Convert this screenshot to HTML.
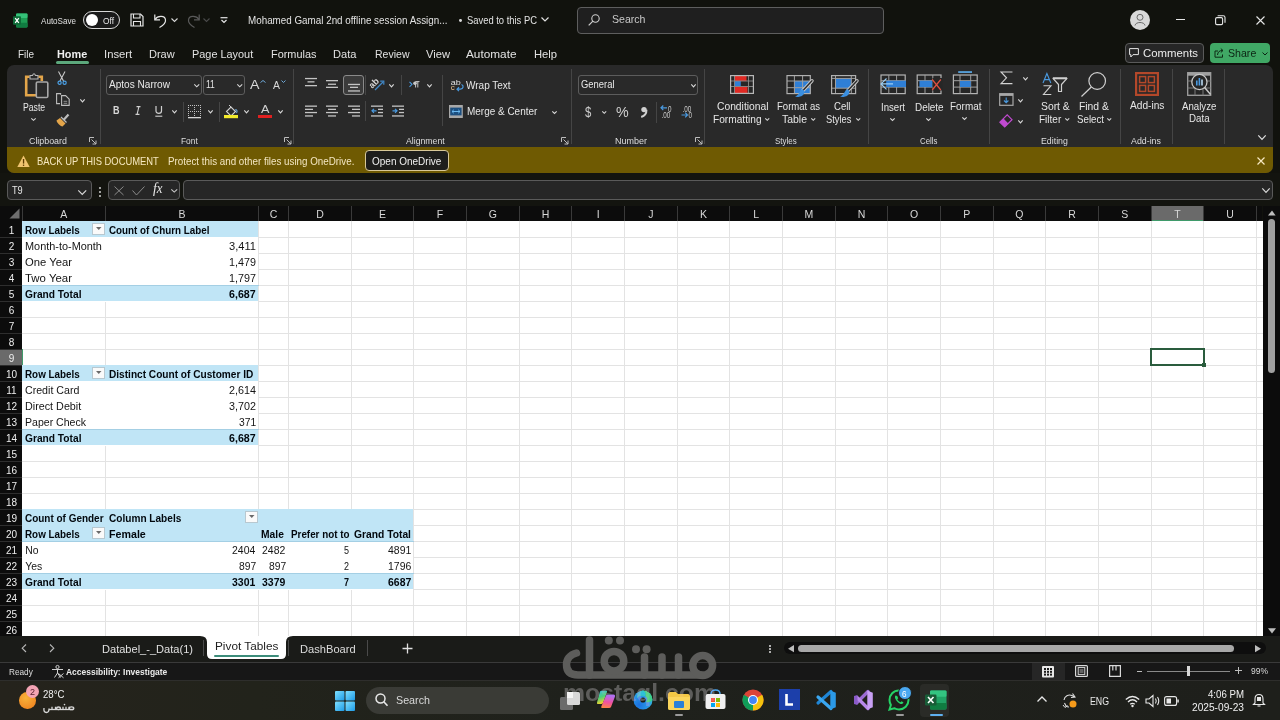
<!DOCTYPE html>
<html><head><meta charset="utf-8">
<style>
*{margin:0;padding:0;box-sizing:border-box}
html,body{width:1280px;height:720px;overflow:hidden;background:#11120d;font-family:"Liberation Sans",sans-serif;color:#e8e8e8;position:relative}
.a{position:absolute}
.t{position:absolute;white-space:nowrap;line-height:1;transform-origin:0 0}
svg{position:absolute;overflow:visible}
</style></head><body>

<div class="a" style="left:0px;top:0px;width:1280px;height:65px;background:#11120d;"></div>
<svg style="left:13px;top:13px;" width="15" height="15" viewBox="0 0 15 15">
<rect x="3" y="0.5" width="11.5" height="14" rx="1.2" fill="#1f9d55"/>
<rect x="3" y="0.5" width="11.5" height="4.6" rx="1" fill="#35c178"/>
<rect x="3" y="9.8" width="11.5" height="4.7" rx="1" fill="#107c41"/>
<rect x="0" y="3.2" width="8" height="8.6" rx="1" fill="#0e6b38"/>
<path d="M2.2 5.2 L5.8 9.8 M5.8 5.2 L2.2 9.8" stroke="#fff" stroke-width="1.3"/>
</svg>
<div class="t" style="left:41.00px;top:15.93px;font-size:9.5px;color:#e0e0e0;transform:scaleX(0.8499);">AutoSave</div>
<div class="a" style="left:83px;top:11px;width:37px;height:18px;border:1.3px solid #d8d8d8;border-radius:9px;background:#1a1a1a"></div>
<div class="a" style="left:85.5px;top:14px;width:12px;height:12px;border-radius:6px;background:#fff"></div>
<div class="t" style="left:103.00px;top:15.93px;font-size:9.5px;color:#e8e8e8;transform:scaleX(0.8772);">Off</div>
<svg style="left:130px;top:13px;" width="14" height="14" viewBox="0 0 14 14"><path d="M1 1 H10.5 L13 3.5 V13 H1 Z" fill="none" stroke="#e6e6e6" stroke-width="1.2"/>
<path d="M3.5 1 V5 H10 V1" fill="none" stroke="#e6e6e6" stroke-width="1.1"/>
<path d="M3.5 13 V8.5 H10.5 V13" fill="none" stroke="#e6e6e6" stroke-width="1.1"/></svg>
<svg style="left:153px;top:13px;" width="16" height="15" viewBox="0 0 16 15"><path d="M2 6.5 C5 2.2 12 2.5 12.5 7 C12.8 9.5 10 12.5 6.5 14.5" fill="none" stroke="#e6e6e6" stroke-width="1.2"/>
<path d="M1.8 1.5 V6.8 H7" fill="none" stroke="#e6e6e6" stroke-width="1.2"/></svg>
<svg style="left:171px;top:18px;" width="7" height="4" viewBox="0 0 7 4"><path d="M0.5 0.5 L3.5 3.5 L6.5 0.5" fill="none" stroke="#d8d8d8" stroke-width="1.1"/></svg>
<svg style="left:185px;top:13px;" width="16" height="15" viewBox="0 0 16 15"><path d="M14 6.5 C11 2.2 4 2.5 3.5 7 C3.2 9.5 6 12.5 9.5 14.5" fill="none" stroke="#5a5a5a" stroke-width="1.2"/>
<path d="M14.2 1.5 V6.8 H9" fill="none" stroke="#5a5a5a" stroke-width="1.2"/></svg>
<svg style="left:203px;top:18px;" width="7" height="4" viewBox="0 0 7 4"><path d="M0.5 0.5 L3.5 3.5 L6.5 0.5" fill="none" stroke="#4a4a4a" stroke-width="1.1"/></svg>
<svg style="left:220px;top:17px;" width="8" height="7" viewBox="0 0 8 7"><path d="M0.5 0.7 H7.5" stroke="#e6e6e6" stroke-width="1.2"/><path d="M1.5 3 L4 5.5 L6.5 3" fill="none" stroke="#e6e6e6" stroke-width="1.2"/></svg>
<div class="t" style="left:247.50px;top:14.99px;font-size:10.6px;color:#e2e2e2;transform:scaleX(0.9285);">Mohamed Gamal 2nd offline session Assign...</div>
<div class="a" style="left:459.3px;top:19.3px;width:2.8px;height:2.8px;background:#d8d8d8;border-radius:50%"></div>
<div class="t" style="left:466.50px;top:14.99px;font-size:10.6px;color:#e2e2e2;transform:scaleX(0.8864);">Saved to this PC</div>
<svg style="left:541px;top:17px;" width="8" height="5" viewBox="0 0 8 5"><path d="M0.5 0.5 L4 4 L7.5 0.5" fill="none" stroke="#e0e0e0" stroke-width="1.2"/></svg>
<div class="a" style="left:577px;top:7px;width:307px;height:27px;border:1px solid #5e5e5e;border-radius:4px;background:#1f1f1f"></div>
<svg style="left:588px;top:14px;" width="12" height="12" viewBox="0 0 12 12"><circle cx="7.5" cy="4.5" r="3.7" fill="none" stroke="#cfcfcf" stroke-width="1.1"/><path d="M4.9 7.1 L0.7 11.3" stroke="#cfcfcf" stroke-width="1.2"/></svg>
<div class="t" style="left:611.50px;top:14.22px;font-size:11.5px;color:#c8c8c8;transform:scaleX(0.9189);">Search</div>
<div class="a" style="left:1130px;top:9.8px;width:20px;height:20px;border-radius:10px;background:#d9d9d9"></div>
<svg style="left:1134px;top:13px;" width="12" height="14" viewBox="0 0 12 14"><circle cx="6" cy="4.3" r="3" fill="none" stroke="#6a6a6a" stroke-width="1"/><path d="M1 12.5 C1.5 8.5 10.5 8.5 11 12.5" fill="none" stroke="#6a6a6a" stroke-width="1"/></svg>
<div class="a" style="left:1176px;top:19px;width:9px;height:1.2px;background:#e6e6e6;"></div>
<svg style="left:1215px;top:15px;" width="11" height="10" viewBox="0 0 11 10"><rect x="0.6" y="2.6" width="7" height="7" rx="1.3" fill="none" stroke="#e6e6e6" stroke-width="1.1"/><path d="M2.6 0.7 H8.2 Q10 0.7 10 2.5 V7.8" fill="none" stroke="#e6e6e6" stroke-width="1.1"/></svg>
<svg style="left:1256px;top:16px;" width="9" height="9" viewBox="0 0 9 9"><path d="M0.5 0.5 L8.5 8.5 M8.5 0.5 L0.5 8.5" stroke="#e6e6e6" stroke-width="1.1"/></svg>
<div class="t" style="left:17.75px;top:47.64px;font-size:11.6px;color:#e2e2e2;transform:scaleX(0.8567);">File</div>
<div class="t" style="left:56.90px;top:47.64px;font-size:11.6px;font-weight:bold;color:#f0f0f0;transform:scaleX(0.9365);">Home</div>
<div class="t" style="left:103.75px;top:47.64px;font-size:11.6px;color:#e2e2e2;transform:scaleX(0.9724);">Insert</div>
<div class="t" style="left:148.90px;top:47.64px;font-size:11.6px;color:#e2e2e2;transform:scaleX(0.9488);">Draw</div>
<div class="t" style="left:191.90px;top:47.64px;font-size:11.6px;color:#e2e2e2;transform:scaleX(0.9396);">Page Layout</div>
<div class="t" style="left:271.25px;top:47.64px;font-size:11.6px;color:#e2e2e2;transform:scaleX(0.9406);">Formulas</div>
<div class="t" style="left:332.80px;top:47.64px;font-size:11.6px;color:#e2e2e2;transform:scaleX(0.9538);">Data</div>
<div class="t" style="left:374.50px;top:47.64px;font-size:11.6px;color:#e2e2e2;transform:scaleX(0.9067);">Review</div>
<div class="t" style="left:426.00px;top:47.64px;font-size:11.6px;color:#e2e2e2;transform:scaleX(0.9623);">View</div>
<div class="t" style="left:466.00px;top:47.64px;font-size:11.6px;color:#e2e2e2;transform:scaleX(1.0172);">Automate</div>
<div class="t" style="left:533.50px;top:47.64px;font-size:11.6px;color:#e2e2e2;transform:scaleX(0.9690);">Help</div>
<div class="a" style="left:56px;top:61.3px;width:33px;height:2.5px;background:#5ca87c;border-radius:1.5px"></div>
<div class="a" style="left:1125px;top:43px;width:79px;height:20px;border:1px solid #5a5a5a;border-radius:4px;background:#262626"></div>
<svg style="left:1129px;top:48px;" width="10" height="10" viewBox="0 0 10 10"><path d="M0.6 0.6 H9.4 V6.6 H4 L1.8 9 V6.6 H0.6 Z" fill="none" stroke="#e6e6e6" stroke-width="1"/></svg>
<div class="t" style="left:1142.50px;top:47.65px;font-size:11px;color:#ececec;transform:scaleX(1.0341);">Comments</div>
<div class="a" style="left:1210px;top:43px;width:60px;height:20px;border-radius:4px;background:#40a865"></div>
<svg style="left:1214px;top:48px;" width="10" height="10" viewBox="0 0 10 10"><path d="M4 3 H1 V9.2 H8.5 V6.5" fill="none" stroke="#0c2a14" stroke-width="1"/><path d="M3.5 7 C3.8 3.8 5.5 2.5 8.5 2.5 M6.8 0.6 L9 2.5 L6.8 4.5" fill="none" stroke="#0c2a14" stroke-width="1"/></svg>
<div class="t" style="left:1227.70px;top:47.65px;font-size:11px;color:#0c2414;transform:scaleX(0.9636);">Share</div>
<svg style="left:1262px;top:52px;" width="6" height="4" viewBox="0 0 6 4"><path d="M0.5 0.5 L3 3 L5.5 0.5" fill="none" stroke="#0c2414" stroke-width="1"/></svg>
<div class="a" style="left:7px;top:65px;width:1266px;height:108px;background:#292929;border-radius:7px;overflow:hidden"><div class="a" style="left:0;top:82px;width:1266px;height:26px;background:#6f5a02"></div></div>
<div class="a" style="left:100px;top:69px;width:1px;height:75px;background:#454545;"></div>
<div class="a" style="left:293px;top:69px;width:1px;height:75px;background:#454545;"></div>
<div class="a" style="left:571px;top:69px;width:1px;height:75px;background:#454545;"></div>
<div class="a" style="left:704px;top:69px;width:1px;height:75px;background:#454545;"></div>
<div class="a" style="left:868px;top:69px;width:1px;height:75px;background:#454545;"></div>
<div class="a" style="left:989px;top:69px;width:1px;height:75px;background:#454545;"></div>
<div class="a" style="left:1120px;top:69px;width:1px;height:75px;background:#454545;"></div>
<div class="a" style="left:1172px;top:69px;width:1px;height:75px;background:#454545;"></div>
<div class="a" style="left:1224px;top:69px;width:1px;height:75px;background:#454545;"></div>
<div class="t" style="left:28.75px;top:135.81px;font-size:9.4px;color:#dedede;transform:scaleX(0.9445);">Clipboard</div>
<svg style="left:89px;top:137px;" width="8" height="8" viewBox="0 0 8 8"><path d="M0.5 5 V0.5 H5" fill="none" stroke="#bdbdbd" stroke-width="1"/><path d="M2.5 2.5 L7 7 M7 3.5 V7 H3.5" fill="none" stroke="#bdbdbd" stroke-width="1"/></svg>
<div class="t" style="left:180.75px;top:135.81px;font-size:9.4px;color:#dedede;transform:scaleX(0.8936);">Font</div>
<svg style="left:284px;top:137px;" width="8" height="8" viewBox="0 0 8 8"><path d="M0.5 5 V0.5 H5" fill="none" stroke="#bdbdbd" stroke-width="1"/><path d="M2.5 2.5 L7 7 M7 3.5 V7 H3.5" fill="none" stroke="#bdbdbd" stroke-width="1"/></svg>
<div class="t" style="left:406.25px;top:135.81px;font-size:9.4px;color:#dedede;transform:scaleX(0.9286);">Alignment</div>
<svg style="left:561px;top:137px;" width="8" height="8" viewBox="0 0 8 8"><path d="M0.5 5 V0.5 H5" fill="none" stroke="#bdbdbd" stroke-width="1"/><path d="M2.5 2.5 L7 7 M7 3.5 V7 H3.5" fill="none" stroke="#bdbdbd" stroke-width="1"/></svg>
<div class="t" style="left:615.00px;top:135.81px;font-size:9.4px;color:#dedede;transform:scaleX(0.9576);">Number</div>
<svg style="left:695px;top:137px;" width="8" height="8" viewBox="0 0 8 8"><path d="M0.5 5 V0.5 H5" fill="none" stroke="#bdbdbd" stroke-width="1"/><path d="M2.5 2.5 L7 7 M7 3.5 V7 H3.5" fill="none" stroke="#bdbdbd" stroke-width="1"/></svg>
<div class="t" style="left:775.00px;top:135.81px;font-size:9.4px;color:#dedede;transform:scaleX(0.8511);">Styles</div>
<div class="t" style="left:919.50px;top:135.81px;font-size:9.4px;color:#dedede;transform:scaleX(0.8367);">Cells</div>
<div class="t" style="left:1040.50px;top:135.81px;font-size:9.4px;color:#dedede;transform:scaleX(0.9387);">Editing</div>
<div class="t" style="left:1130.75px;top:135.81px;font-size:9.4px;color:#dedede;transform:scaleX(0.9414);">Add-ins</div>
<svg style="left:1257.5px;top:135px;" width="8" height="4.5" viewBox="0 0 8 4.5"><path d="M0.3 0.3 L4.0 4.3 L7.7 0.3" fill="none" stroke="#e0e0e0" stroke-width="1.2"/></svg>
<svg style="left:24px;top:71px;" width="26" height="28" viewBox="0 0 26 28">
<path d="M5.5 5.8 H2.2 V24.3 H12" fill="none" stroke="#e3a54a" stroke-width="2.6"/>
<path d="M14.5 5.8 H17.8 V10" fill="none" stroke="#e3a54a" stroke-width="2.6"/>
<path d="M6 8 V4.5 H8.5 Q10 1 11.5 4.5 H14 V8 Z" fill="#2a2a2a" stroke="#b8b8b8" stroke-width="1.1"/>
<rect x="12.3" y="11" width="11.5" height="15.5" rx="1.3" fill="#2a2a2a" stroke="#a8a8a8" stroke-width="1.6"/>
</svg>
<div class="t" style="left:23.10px;top:101.67px;font-size:10.5px;color:#e6e6e6;transform:scaleX(0.8238);">Paste</div>
<svg style="left:31.2px;top:118.2px;" width="5" height="2.5" viewBox="0 0 5 2.5"><path d="M0.3 0.3 L2.5 2.3 L4.7 0.3" fill="none" stroke="#d8d8d8" stroke-width="1.1"/></svg>
<svg style="left:57px;top:71px;" width="10" height="14" viewBox="0 0 10 14"><path d="M1.5 0.5 L6.5 10 M8 0.5 L3 10" stroke="#c8c8c8" stroke-width="1.1"/>
<circle cx="2.6" cy="11.8" r="1.6" fill="none" stroke="#4aa0e6" stroke-width="1.2"/><circle cx="7.6" cy="11.8" r="1.6" fill="none" stroke="#4aa0e6" stroke-width="1.2"/></svg>
<svg style="left:56px;top:93px;" width="14" height="13" viewBox="0 0 14 13"><path d="M4.6 1.8 V0.6 H0.6 V10.6 H4" fill="none" stroke="#bdbdbd" stroke-width="1.1"/>
<path d="M5.6 2.6 H9.6 L13.2 6.2 V12.4 H5.6 Z" fill="none" stroke="#bdbdbd" stroke-width="1.1"/>
<path d="M7.6 8.3 H11.2 M7.6 10.3 H11.2" stroke="#a8a8a8" stroke-width="0.8"/></svg>
<svg style="left:80px;top:98.5px;" width="5" height="3" viewBox="0 0 5 3"><path d="M0.3 0.3 L2.5 2.8 L4.7 0.3" fill="none" stroke="#d8d8d8" stroke-width="1.1"/></svg>
<svg style="left:56px;top:113px;" width="14" height="14" viewBox="0 0 14 14"><path d="M7.5 7 L12.5 1.5" stroke="#bdbdbd" stroke-width="2.2"/>
<path d="M4 5 L9.5 10.5 L6.5 13.5 C4 13 1 10 0.5 7.5 Z" fill="#e3a54a"/>
<path d="M5 4 L10.5 9.5" stroke="#bdbdbd" stroke-width="1.3"/></svg>
<div class="a" style="left:106.25px;top:75px;width:95.5px;height:19.8px;border:1px solid #5c5c5c;border-radius:3px"></div>
<div class="t" style="left:108.60px;top:79.45px;font-size:11px;color:#e8e8e8;transform:scaleX(0.9151);">Aptos Narrow</div>
<svg style="left:193.75px;top:83.6px;" width="5.5" height="3" viewBox="0 0 5.5 3"><path d="M0.3 0.3 L2.75 2.8 L5.2 0.3" fill="none" stroke="#d8d8d8" stroke-width="1.1"/></svg>
<div class="a" style="left:203px;top:75px;width:41.5px;height:19.8px;border:1px solid #5c5c5c;border-radius:3px"></div>
<div class="t" style="left:206.00px;top:79.45px;font-size:11px;color:#e8e8e8;transform:scaleX(0.7692);">11</div>
<svg style="left:237px;top:83.6px;" width="5.5" height="3" viewBox="0 0 5.5 3"><path d="M0.3 0.3 L2.75 2.8 L5.2 0.3" fill="none" stroke="#d8d8d8" stroke-width="1.1"/></svg>
<div class="t" style="left:250.00px;top:77.75px;font-size:13px;color:#d8d8d8;transform:scaleX(1.0907);">A</div>
<svg style="left:260px;top:79.5px;" width="6" height="3" viewBox="0 0 6 3"><path d="M0.5 2.5 L3 0.5 L5.5 2.5" fill="none" stroke="#6ea8d8" stroke-width="1"/></svg>
<div class="t" style="left:272.70px;top:80.08px;font-size:10.5px;color:#d8d8d8;transform:scaleX(0.9950);">A</div>
<svg style="left:281px;top:79.5px;" width="5" height="3" viewBox="0 0 5 3"><path d="M0.5 0.5 L2.5 2.5 L4.5 0.5" fill="none" stroke="#6ea8d8" stroke-width="1"/></svg>
<div class="t" style="left:113.00px;top:105.22px;font-size:11.5px;font-weight:bold;color:#d8d8d8;transform:scaleX(0.7850);">B</div>
<svg style="left:134.5px;top:106px;" width="6" height="9" viewBox="0 0 6 9"><path d="M1.5 0.6 H5.5 M0.5 8.4 H4.5 M3.9 0.6 L2.1 8.4" stroke="#d0d0d0" stroke-width="1.1" fill="none"/></svg>
<svg style="left:154.5px;top:106px;" width="8" height="11" viewBox="0 0 8 11"><path d="M1 0 V5 C1 8.2 6.5 8.2 6.5 5 V0" fill="none" stroke="#d0d0d0" stroke-width="1.2"/><path d="M0.3 10.2 H7.3" stroke="#d0d0d0" stroke-width="1.1"/></svg>
<svg style="left:171.9px;top:110.2px;" width="5" height="3" viewBox="0 0 5 3"><path d="M0.3 0.3 L2.5 2.8 L4.7 0.3" fill="none" stroke="#d8d8d8" stroke-width="1.1"/></svg>
<div class="a" style="left:183px;top:101.5px;width:1px;height:20.0px;background:#454545;"></div>
<svg style="left:188px;top:104.5px;" width="14" height="14" viewBox="0 0 14 14"><g fill="#c0c0c0"><rect x="0" y="0" width="1" height="1"/><rect x="0" y="0" width="1" height="1"/><rect x="6" y="0" width="1" height="1"/><rect x="0" y="6" width="1" height="1"/><rect x="12" y="0" width="1" height="1"/><rect x="0" y="2" width="1" height="1"/><rect x="2" y="0" width="1" height="1"/><rect x="6" y="2" width="1" height="1"/><rect x="2" y="6" width="1" height="1"/><rect x="12" y="2" width="1" height="1"/><rect x="0" y="4" width="1" height="1"/><rect x="4" y="0" width="1" height="1"/><rect x="6" y="4" width="1" height="1"/><rect x="4" y="6" width="1" height="1"/><rect x="12" y="4" width="1" height="1"/><rect x="0" y="6" width="1" height="1"/><rect x="6" y="0" width="1" height="1"/><rect x="6" y="6" width="1" height="1"/><rect x="6" y="6" width="1" height="1"/><rect x="12" y="6" width="1" height="1"/><rect x="0" y="8" width="1" height="1"/><rect x="8" y="0" width="1" height="1"/><rect x="6" y="8" width="1" height="1"/><rect x="8" y="6" width="1" height="1"/><rect x="12" y="8" width="1" height="1"/><rect x="0" y="10" width="1" height="1"/><rect x="10" y="0" width="1" height="1"/><rect x="6" y="10" width="1" height="1"/><rect x="10" y="6" width="1" height="1"/><rect x="12" y="10" width="1" height="1"/><rect x="0" y="12" width="1" height="1"/><rect x="12" y="0" width="1" height="1"/><rect x="6" y="12" width="1" height="1"/><rect x="12" y="6" width="1" height="1"/><rect x="12" y="12" width="1" height="1"/></g><rect x="0" y="12" width="13" height="1.3" fill="#d8d8d8"/></svg>
<svg style="left:207.8px;top:110.2px;" width="5" height="3" viewBox="0 0 5 3"><path d="M0.3 0.3 L2.5 2.8 L4.7 0.3" fill="none" stroke="#d8d8d8" stroke-width="1.1"/></svg>
<div class="a" style="left:219px;top:101.5px;width:1px;height:20.0px;background:#454545;"></div>
<svg style="left:224px;top:105px;" width="15" height="14" viewBox="0 0 15 14"><path d="M2.5 6.5 L7 2 L11.5 6.5 L7 11 Z" fill="none" stroke="#d0d0d0" stroke-width="1.1"/>
<path d="M7 2 L5 0" stroke="#d0d0d0" stroke-width="1"/><path d="M11 5 C13 4 13.5 6.5 12.5 8" stroke="#6ea8d8" stroke-width="1.1" fill="none"/>
<rect x="0" y="10" width="14" height="3.2" fill="#f2ea2c"/></svg>
<svg style="left:243.75px;top:110.2px;" width="5" height="3" viewBox="0 0 5 3"><path d="M0.3 0.3 L2.5 2.8 L4.7 0.3" fill="none" stroke="#d8d8d8" stroke-width="1.1"/></svg>
<div class="t" style="left:261.00px;top:104.80px;font-size:10px;color:#d0d0d0;transform:scaleX(1.2687);">A</div>
<div class="a" style="left:257.8px;top:115px;width:14px;height:3.2px;background:#e02020;"></div>
<svg style="left:278px;top:110.2px;" width="5" height="3" viewBox="0 0 5 3"><path d="M0.3 0.3 L2.5 2.8 L4.7 0.3" fill="none" stroke="#d8d8d8" stroke-width="1.1"/></svg>
<svg style="left:305px;top:0px;" width="14" height="1" viewBox="0 0 14 1"><rect x="0" y="77.9" width="12" height="1.3" fill="#c4c4c4"/><rect x="2.5" y="81.2" width="7.0" height="1.3" fill="#c4c4c4"/><rect x="0" y="85" width="12" height="1.3" fill="#c4c4c4"/></svg>
<svg style="left:326px;top:0px;" width="14" height="1" viewBox="0 0 14 1"><rect x="0" y="80" width="12" height="1.3" fill="#c4c4c4"/><rect x="2" y="83.6" width="8" height="1.3" fill="#c4c4c4"/><rect x="0" y="86.7" width="12" height="1.3" fill="#c4c4c4"/></svg>
<div class="a" style="left:343px;top:75px;width:20.6px;height:20px;border:1px solid #8a8a8a;border-radius:3px;background:#3b3b3b"></div>
<svg style="left:347.5px;top:0px;" width="14" height="1" viewBox="0 0 14 1"><rect x="0" y="83.8" width="12" height="1.3" fill="#c4c4c4"/><rect x="2" y="86.7" width="8" height="1.3" fill="#c4c4c4"/><rect x="0" y="90.3" width="12" height="1.3" fill="#c4c4c4"/></svg>
<div class="a" style="left:365px;top:75px;width:1px;height:20px;background:#454545;"></div>
<svg style="left:369px;top:77px;" width="17" height="14" viewBox="0 0 17 14"><text x="0" y="0" transform="translate(3.2,12) rotate(-45)" font-family="Liberation Sans" font-size="9" font-weight="bold" fill="#d8d8d8">ab</text>
<path d="M6 13 L14 5" stroke="#4088c8" stroke-width="1.3"/><path d="M11.2 4.2 H14.8 V7.8" fill="none" stroke="#4088c8" stroke-width="1.2"/></svg>
<svg style="left:388.8px;top:83.8px;" width="5" height="3" viewBox="0 0 5 3"><path d="M0.3 0.3 L2.5 2.8 L4.7 0.3" fill="none" stroke="#d8d8d8" stroke-width="1.1"/></svg>
<div class="a" style="left:401px;top:75px;width:1px;height:20px;background:#454545;"></div>
<svg style="left:408.5px;top:81px;" width="11" height="7" viewBox="0 0 11 7"><path d="M0.5 0.8 L3 3.3 L0.5 5.8" fill="none" stroke="#4a9ae0" stroke-width="1.1"/><path d="M6.6 6.5 V0.6 H10.5 M8.8 0.6 V6.5" fill="none" stroke="#c8c8c8" stroke-width="1"/><circle cx="6" cy="2.2" r="1.8" fill="#c8c8c8"/></svg>
<svg style="left:426.9px;top:83.8px;" width="5" height="3" viewBox="0 0 5 3"><path d="M0.3 0.3 L2.5 2.8 L4.7 0.3" fill="none" stroke="#d8d8d8" stroke-width="1.1"/></svg>
<div class="a" style="left:441.5px;top:75px;width:1px;height:51px;background:#454545;"></div>
<svg style="left:305px;top:0px;" width="14" height="1" viewBox="0 0 14 1"><rect x="0" y="105.5" width="12" height="1.3" fill="#c4c4c4"/><rect x="0" y="108.7" width="8" height="1.3" fill="#c4c4c4"/><rect x="0" y="111.9" width="12" height="1.3" fill="#c4c4c4"/><rect x="0" y="115.3" width="8" height="1.3" fill="#c4c4c4"/></svg>
<svg style="left:326px;top:0px;" width="14" height="1" viewBox="0 0 14 1"><rect x="0" y="105.5" width="12" height="1.3" fill="#c4c4c4"/><rect x="2" y="108.7" width="8" height="1.3" fill="#c4c4c4"/><rect x="0" y="111.9" width="12" height="1.3" fill="#c4c4c4"/><rect x="2" y="115.3" width="8" height="1.3" fill="#c4c4c4"/></svg>
<svg style="left:347.5px;top:0px;" width="14" height="1" viewBox="0 0 14 1"><rect x="0" y="105.5" width="12" height="1.3" fill="#c4c4c4"/><rect x="4" y="108.7" width="8" height="1.3" fill="#c4c4c4"/><rect x="0" y="111.9" width="12" height="1.3" fill="#c4c4c4"/><rect x="4" y="115.3" width="8" height="1.3" fill="#c4c4c4"/></svg>
<div class="a" style="left:365px;top:101px;width:1px;height:20px;background:#454545;"></div>
<svg style="left:371px;top:105px;" width="13" height="12" viewBox="0 0 13 12"><rect x="0" y="0.5" width="12" height="1.3" fill="#c4c4c4"/><rect x="7" y="3.7" width="5" height="1.3" fill="#c4c4c4"/><rect x="7" y="6.9" width="5" height="1.3" fill="#c4c4c4"/><rect x="0" y="10.3" width="12" height="1.3" fill="#c4c4c4"/><path d="M5.5 5.8 H1 M3 3.8 L1 5.8 L3 7.8" fill="none" stroke="#4a9ae0" stroke-width="1.2"/></svg>
<svg style="left:392px;top:105px;" width="13" height="12" viewBox="0 0 13 12"><rect x="0" y="0.5" width="12" height="1.3" fill="#c4c4c4"/><rect x="7" y="3.7" width="5" height="1.3" fill="#c4c4c4"/><rect x="7" y="6.9" width="5" height="1.3" fill="#c4c4c4"/><rect x="0" y="10.3" width="12" height="1.3" fill="#c4c4c4"/><path d="M0.5 5.8 H5 M3 3.8 L5 5.8 L3 7.8" fill="none" stroke="#4a9ae0" stroke-width="1.2"/></svg>
<svg style="left:450px;top:78px;" width="15" height="13" viewBox="0 0 15 13"><text x="0.8" y="6.5" font-family="Liberation Sans" font-size="8" fill="#e0e0e0" textLength="10" lengthAdjust="spacingAndGlyphs">ab</text><text x="0.8" y="12.3" font-family="Liberation Sans" font-size="8" fill="#e8c090">c</text>
<path d="M11.5 6.5 C14 7.5 13.5 11.2 10.5 11.2 H7.2 M9 9.3 L7 11.2 L9 13.1" fill="none" stroke="#4a9ae0" stroke-width="1.2"/></svg>
<div class="t" style="left:466.20px;top:79.70px;font-size:10.7px;color:#e6e6e6;transform:scaleX(0.9356);">Wrap Text</div>
<svg style="left:449px;top:105px;" width="14" height="13" viewBox="0 0 14 13"><rect x="0.6" y="0.6" width="12.6" height="11.8" fill="#1c4f80" stroke="#a8a8a8" stroke-width="1.2"/>
<rect x="0.6" y="0.6" width="12.6" height="2" fill="#a8a8a8"/><rect x="0.6" y="10.4" width="12.6" height="2" fill="#a8a8a8"/>
<path d="M3 6.5 H11 M4.8 4.8 L3 6.5 L4.8 8.2 M9.2 4.8 L11 6.5 L9.2 8.2" fill="none" stroke="#6ab8f0" stroke-width="1"/></svg>
<div class="t" style="left:466.60px;top:106.11px;font-size:10.7px;color:#e6e6e6;transform:scaleX(0.9319);">Merge &amp; Center</div>
<svg style="left:552.2px;top:110.6px;" width="5" height="2.6" viewBox="0 0 5 2.6"><path d="M0.3 0.3 L2.5 2.4 L4.7 0.3" fill="none" stroke="#d8d8d8" stroke-width="1.1"/></svg>
<div class="a" style="left:578px;top:75px;width:120px;height:19.8px;border:1px solid #5c5c5c;border-radius:3px"></div>
<div class="t" style="left:580.50px;top:79.45px;font-size:11px;color:#e8e8e8;transform:scaleX(0.8555);">General</div>
<svg style="left:691px;top:83.6px;" width="5" height="3" viewBox="0 0 5 3"><path d="M0.3 0.3 L2.5 2.8 L4.7 0.3" fill="none" stroke="#d8d8d8" stroke-width="1.1"/></svg>
<div class="t" style="left:585.00px;top:105.47px;font-size:14.5px;color:#d0d0d0;transform:scaleX(0.7829);">$</div>
<svg style="left:601.5px;top:110.5px;" width="4.5" height="2.5" viewBox="0 0 4.5 2.5"><path d="M0.3 0.3 L2.25 2.3 L4.2 0.3" fill="none" stroke="#d8d8d8" stroke-width="1.1"/></svg>
<div class="t" style="left:615.60px;top:104.97px;font-size:14.5px;color:#d0d0d0;transform:scaleX(0.9841);">%</div>
<svg style="left:640px;top:106px;" width="8" height="12" viewBox="0 0 8 12"><circle cx="4" cy="3.6" r="2.7" fill="#d0d0d0"/><path d="M6.5 3.8 C6.6 7.5 4.5 10 1.2 11" fill="none" stroke="#d0d0d0" stroke-width="1.9"/></svg>
<div class="a" style="left:655.5px;top:102px;width:1px;height:21px;background:#454545;"></div>
<svg style="left:660px;top:104px;" width="15" height="15" viewBox="0 0 15 15"><path d="M7 3.8 H1 M3.3 1.5 L1 3.8 L3.3 6.1" fill="none" stroke="#4a9ae0" stroke-width="1.2"/>
<text x="0" y="0" transform="translate(8,7.8) scale(0.7,1)" font-family="Liberation Sans" font-size="9" fill="#c8c8c8">0</text>
<text x="0" y="0" transform="translate(1.5,13.8) scale(0.7,1)" font-family="Liberation Sans" font-size="9" fill="#c8c8c8">.00</text></svg>
<svg style="left:681px;top:104px;" width="15" height="15" viewBox="0 0 15 15"><text x="0" y="0" transform="translate(1.5,7.6) scale(0.7,1)" font-family="Liberation Sans" font-size="9" fill="#c8c8c8">.00</text>
<path d="M0.5 11 H6.5 M4.2 8.7 L6.5 11 L4.2 13.3" fill="none" stroke="#4a9ae0" stroke-width="1.2"/>
<text x="0" y="0" transform="translate(7.5,14) scale(0.7,1)" font-family="Liberation Sans" font-size="9" fill="#c8c8c8">0</text></svg>
<svg style="left:730px;top:75px;" width="24" height="19" viewBox="0 0 24 19"><rect x="0.6" y="0.6" width="22.8" height="17.8" fill="#262626"/>
<rect x="4.5" y="0.6" width="12" height="5.5" fill="#e02a24"/><rect x="4.5" y="6" width="6.3" height="5.5" fill="#2f7fd6"/><rect x="4.5" y="11.5" width="13" height="6.9" fill="#e02a24"/>
<path d="M4.5 0.6 V18.4 M18.5 0.6 V18.4 M0.6 6 H23.4 M0.6 11.5 H23.4" stroke="#8a8a8a" stroke-width="0.9"/>
<rect x="0.6" y="0.6" width="22.8" height="17.8" fill="none" stroke="#b8b8b8" stroke-width="1.2"/></svg>
<div class="t" style="left:716.50px;top:100.82px;font-size:10.8px;color:#e6e6e6;transform:scaleX(0.9528);">Conditional</div>
<div class="t" style="left:713.40px;top:114.12px;font-size:10.8px;color:#e6e6e6;transform:scaleX(0.9414);">Formatting</div>
<svg style="left:765px;top:118px;" width="4.5" height="2.5" viewBox="0 0 4.5 2.5"><path d="M0.3 0.3 L2.25 2.3 L4.2 0.3" fill="none" stroke="#d8d8d8" stroke-width="1.1"/></svg>
<svg style="left:785.5px;top:75px;" width="28" height="24" viewBox="0 0 28 24"><rect x="1" y="0.6" width="23.3" height="18" fill="#262626"/>
<rect x="8.4" y="6" width="15.9" height="12.6" fill="#2f7fd6"/>
<path d="M8.4 0.6 V18.6 M16.6 0.6 V18.6 M1 6 H24.3 M1 12.7 H24.3" stroke="#a0a0a0" stroke-width="1"/>
<rect x="1" y="0.6" width="23.3" height="18" fill="none" stroke="#b0b0b0" stroke-width="1.2"/>
<path d="M26 5.8 L16.5 16" stroke="#c8c8c8" stroke-width="3.4" stroke-linecap="round"/><path d="M26 5.8 L16.5 16" stroke="#2a2a2a" stroke-width="1.4" stroke-linecap="round"/><path d="M16.8 14.2 C13.5 14.5 14 19.5 9 21.8 C14.5 22.5 18.5 20.5 18.5 16.2 Z" fill="#3b8fe0"/></svg>
<div class="t" style="left:777.00px;top:100.82px;font-size:10.8px;color:#e6e6e6;transform:scaleX(0.8848);">Format as</div>
<div class="t" style="left:782.00px;top:114.12px;font-size:10.8px;color:#e6e6e6;transform:scaleX(0.9685);">Table</div>
<svg style="left:810.5px;top:118px;" width="4.5" height="2.5" viewBox="0 0 4.5 2.5"><path d="M0.3 0.3 L2.25 2.3 L4.2 0.3" fill="none" stroke="#d8d8d8" stroke-width="1.1"/></svg>
<svg style="left:830.5px;top:75px;" width="28" height="24" viewBox="0 0 28 24"><rect x="0.6" y="0.6" width="24" height="18" fill="#262626"/>
<rect x="4.5" y="3.4" width="15.8" height="9.8" fill="#2f7fd6"/>
<path d="M4.5 0.6 V18.6 M20.3 0.6 V18.6 M0.6 3.4 H24.6 M0.6 13.2 H24.6" stroke="#a0a0a0" stroke-width="1"/>
<rect x="0.6" y="0.6" width="24" height="18" fill="none" stroke="#b0b0b0" stroke-width="1.2"/>
<path d="M26 5.8 L16.5 16" stroke="#c8c8c8" stroke-width="3.4" stroke-linecap="round"/><path d="M26 5.8 L16.5 16" stroke="#2a2a2a" stroke-width="1.4" stroke-linecap="round"/><path d="M16.8 14.2 C13.5 14.5 14 19.5 9 21.8 C14.5 22.5 18.5 20.5 18.5 16.2 Z" fill="#3b8fe0"/></svg>
<div class="t" style="left:834.00px;top:100.82px;font-size:10.8px;color:#e6e6e6;transform:scaleX(0.8857);">Cell</div>
<div class="t" style="left:825.50px;top:114.12px;font-size:10.8px;color:#e6e6e6;transform:scaleX(0.8665);">Styles</div>
<svg style="left:855.5px;top:118px;" width="4.5" height="2.5" viewBox="0 0 4.5 2.5"><path d="M0.3 0.3 L2.25 2.3 L4.2 0.3" fill="none" stroke="#d8d8d8" stroke-width="1.1"/></svg>
<svg style="left:880px;top:74px;" width="28" height="21" viewBox="0 0 28 21"><rect x="1" y="1" width="24.2" height="18.6" fill="#262626" stroke="#b4b4b4" stroke-width="1.2"/>
<path d="M8.8 1 V19.6 M16.6 1 V19.6 M1 6.7 H25.2 M1 13.1 H25.2" stroke="#a0a0a0" stroke-width="1"/>
<rect x="6.2" y="6.7" width="19.8" height="6.4" fill="#2f7fd6"/>
<path d="M13 9.9 H2 M6.5 4.5 L1 9.9 L6.5 15.3" fill="none" stroke="#9ccff5" stroke-width="1.1"/></svg>
<div class="t" style="left:880.60px;top:101.82px;font-size:10.8px;color:#e6e6e6;transform:scaleX(0.8889);">Insert</div>
<svg style="left:889.5px;top:117.5px;" width="5" height="2.6" viewBox="0 0 5 2.6"><path d="M0.3 0.3 L2.5 2.4 L4.7 0.3" fill="none" stroke="#d8d8d8" stroke-width="1.1"/></svg>
<svg style="left:916px;top:74px;" width="28" height="21" viewBox="0 0 28 21"><rect x="1.2" y="1" width="23.8" height="18.6" fill="#262626" stroke="#b4b4b4" stroke-width="1.2"/>
<path d="M9 1 V19.6 M16.8 1 V19.6 M1.2 6.7 H25 M1.2 13.1 H25" stroke="#a0a0a0" stroke-width="1"/>
<rect x="3.4" y="6.7" width="13" height="6.4" fill="#2f7fd6"/>
<rect x="16.5" y="4" width="10" height="12.5" fill="#262626"/>
<path d="M16.2 5.5 L24.8 16 M24.8 5.5 L16.2 16" stroke="#e05040" stroke-width="1.2"/></svg>
<div class="t" style="left:914.60px;top:101.82px;font-size:10.8px;color:#e6e6e6;transform:scaleX(0.9163);">Delete</div>
<svg style="left:925.5px;top:117.5px;" width="5" height="2.6" viewBox="0 0 5 2.6"><path d="M0.3 0.3 L2.5 2.4 L4.7 0.3" fill="none" stroke="#d8d8d8" stroke-width="1.1"/></svg>
<svg style="left:952px;top:70px;" width="28" height="25" viewBox="0 0 28 25"><rect x="6.2" y="1.2" width="13.8" height="1.7" fill="#5aaae8"/>
<rect x="1.4" y="5" width="23.8" height="18.6" fill="#262626" stroke="#b4b4b4" stroke-width="1.2"/>
<path d="M8 5 V23.6 M18.7 5 V23.6 M1.4 10.7 H25.2 M1.4 17.1 H25.2" stroke="#a0a0a0" stroke-width="1"/>
<rect x="8" y="11" width="10.7" height="6" fill="#2f7fd6"/></svg>
<div class="t" style="left:949.80px;top:100.82px;font-size:10.8px;color:#e6e6e6;transform:scaleX(0.9186);">Format</div>
<svg style="left:961.5px;top:117px;" width="5" height="2.6" viewBox="0 0 5 2.6"><path d="M0.3 0.3 L2.5 2.4 L4.7 0.3" fill="none" stroke="#d8d8d8" stroke-width="1.1"/></svg>
<svg style="left:1000px;top:71px;" width="13" height="14" viewBox="0 0 13 14"><path d="M11.9 1.5 V1 H1 L6.5 6.8 L1 12.6 H11.9 V12" fill="none" stroke="#d4d4d4" stroke-width="1.1" stroke-linejoin="miter"/></svg>
<svg style="left:1023px;top:77px;" width="5" height="3" viewBox="0 0 5 3"><path d="M0.3 0.3 L2.5 2.8 L4.7 0.3" fill="none" stroke="#d8d8d8" stroke-width="1.1"/></svg>
<svg style="left:999px;top:93px;" width="15" height="13" viewBox="0 0 15 13"><rect x="0.7" y="0.7" width="13.3" height="11.6" fill="#262626" stroke="#a8a8a8" stroke-width="1.2"/><rect x="0.7" y="0.7" width="13.3" height="2.2" fill="#a8a8a8"/><path d="M7.2 4.5 V9.5 M5 7.5 L7.2 9.7 L9.4 7.5" fill="none" stroke="#4a9ae0" stroke-width="1.1"/></svg>
<svg style="left:1018px;top:98.5px;" width="5" height="3" viewBox="0 0 5 3"><path d="M0.3 0.3 L2.5 2.8 L4.7 0.3" fill="none" stroke="#d8d8d8" stroke-width="1.1"/></svg>
<svg style="left:999px;top:114px;" width="14" height="14" viewBox="0 0 14 14"><path d="M0.9 8.2 L8.2 0.9 L13 5.7 L5.7 13 Z" fill="none" stroke="#c04ad0" stroke-width="1.2"/><path d="M0.9 8.2 L4.5 4.6 L9.3 9.4 L5.7 13 Z" fill="#c04ad0"/></svg>
<svg style="left:1018px;top:119.5px;" width="5" height="3" viewBox="0 0 5 3"><path d="M0.3 0.3 L2.5 2.8 L4.7 0.3" fill="none" stroke="#d8d8d8" stroke-width="1.1"/></svg>
<svg style="left:1042px;top:72px;" width="27" height="25" viewBox="0 0 27 25"><path d="M1 11 L4.9 1.5 L8.8 11 M2.4 7.6 H7.4" fill="none" stroke="#4a9ae0" stroke-width="1.1"/>
<path d="M1.5 13.7 H9 L1.5 22.5 H9.3" fill="none" stroke="#d0d0d0" stroke-width="1.1"/>
<path d="M11 6.3 H25 L19.5 12.5 V19.5 H16.5 V12.5 Z" fill="none" stroke="#d0d0d0" stroke-width="1.2" stroke-linejoin="round"/>
<path d="M11 6.3 H25" stroke="#d0d0d0" stroke-width="2"/></svg>
<div class="t" style="left:1040.50px;top:100.82px;font-size:10.8px;color:#e6e6e6;transform:scaleX(0.9592);">Sort &amp;</div>
<div class="t" style="left:1039.30px;top:114.12px;font-size:10.8px;color:#e6e6e6;transform:scaleX(0.9259);">Filter</div>
<svg style="left:1064.5px;top:118px;" width="4.5" height="2.5" viewBox="0 0 4.5 2.5"><path d="M0.3 0.3 L2.25 2.3 L4.2 0.3" fill="none" stroke="#d8d8d8" stroke-width="1.1"/></svg>
<svg style="left:1080px;top:71px;" width="27" height="28" viewBox="0 0 27 28"><circle cx="17.2" cy="10" r="8.3" fill="none" stroke="#d0d0d0" stroke-width="1.2"/><path d="M11.3 16 L1.5 25.5" stroke="#d0d0d0" stroke-width="1.2"/></svg>
<div class="t" style="left:1079.00px;top:100.82px;font-size:10.8px;color:#e6e6e6;transform:scaleX(0.9580);">Find &amp;</div>
<div class="t" style="left:1076.50px;top:114.12px;font-size:10.8px;color:#e6e6e6;transform:scaleX(0.8993);">Select</div>
<svg style="left:1106.5px;top:118px;" width="4.5" height="2.5" viewBox="0 0 4.5 2.5"><path d="M0.3 0.3 L2.25 2.3 L4.2 0.3" fill="none" stroke="#d8d8d8" stroke-width="1.1"/></svg>
<svg style="left:1135px;top:72px;" width="24" height="24" viewBox="0 0 24 24"><rect x="1.1" y="1.1" width="21.8" height="21.8" fill="none" stroke="#b4482a" stroke-width="2.2"/>
<rect x="4.6" y="4.6" width="6" height="6" fill="none" stroke="#b4482a" stroke-width="1.5"/><rect x="13.4" y="4.6" width="6" height="6" fill="none" stroke="#b4482a" stroke-width="1.5"/>
<rect x="4.6" y="13.4" width="6" height="6" fill="none" stroke="#b4482a" stroke-width="1.5"/><rect x="13.4" y="13.4" width="6" height="6" fill="none" stroke="#b4482a" stroke-width="1.5"/></svg>
<div class="t" style="left:1129.80px;top:100.42px;font-size:10.8px;color:#e6e6e6;transform:scaleX(0.9396);">Add-ins</div>
<svg style="left:1187px;top:72px;" width="25" height="25" viewBox="0 0 25 25"><rect x="0.7" y="0.7" width="23" height="22.6" fill="#262626" stroke="#a0a0a0" stroke-width="1.3"/>
<rect x="0.7" y="0.7" width="23" height="3" fill="#a0a0a0"/>
<path d="M0.7 9 H23.7 M0.7 16 H23.7 M8 3.7 V23.3 M16 3.7 V23.3" stroke="#7a7a7a" stroke-width="1"/>
<circle cx="12.4" cy="10" r="7.6" fill="#262626" stroke="#c8c8c8" stroke-width="1.3"/>
<path d="M17.6 15.6 L23.6 22.6" stroke="#c8c8c8" stroke-width="1.5"/>
<rect x="9" y="8.5" width="1.6" height="5" fill="#4a9ae0"/><rect x="11.6" y="6" width="1.6" height="7.5" fill="#4a9ae0"/><rect x="14.2" y="7.5" width="1.6" height="6" fill="#b8d8f0"/></svg>
<div class="t" style="left:1181.80px;top:100.82px;font-size:10.8px;color:#e6e6e6;transform:scaleX(0.8947);">Analyze</div>
<div class="t" style="left:1188.70px;top:113.42px;font-size:10.8px;color:#e6e6e6;transform:scaleX(0.9018);">Data</div>
<svg style="left:17px;top:154.5px;" width="13" height="12.5" viewBox="0 0 13 12.5"><path d="M6.5 0.5 L12.7 12 H0.3 Z" fill="#f0c470"/><rect x="5.9" y="4" width="1.3" height="4.6" fill="#5a3a00"/><rect x="5.9" y="9.6" width="1.3" height="1.3" fill="#5a3a00"/></svg>
<div class="t" style="left:37.00px;top:155.60px;font-size:10.7px;color:#f6e8c0;transform:scaleX(0.8794);">BACK UP THIS DOCUMENT</div>
<div class="t" style="left:168.40px;top:155.60px;font-size:10.7px;color:#f3e6c2;transform:scaleX(0.9174);">Protect this and other files using OneDrive.</div>
<div class="a" style="left:364.5px;top:150px;width:84px;height:21px;border:1px solid #d8c898;border-radius:4px;background:#1e1e1c"></div>
<div class="t" style="left:371.50px;top:155.60px;font-size:10.7px;color:#f0f0f0;transform:scaleX(0.9346);">Open OneDrive</div>
<svg style="left:1256.5px;top:157px;" width="8" height="8" viewBox="0 0 8 8"><path d="M0.5 0.5 L7.5 7.5 M7.5 0.5 L0.5 7.5" stroke="#f6e8c0" stroke-width="1.2"/></svg>
<div class="a" style="left:0px;top:173px;width:1280px;height:33px;background:#13140f;"></div>
<div class="a" style="left:7px;top:180px;width:84.5px;height:19.8px;border:1px solid #5a5a5a;border-radius:4px;background:#262626"></div>
<div class="t" style="left:12.30px;top:184.91px;font-size:10.7px;color:#e8e8e8;transform:scaleX(0.8584);">T9</div>
<svg style="left:78px;top:189.5px;" width="8.5" height="4.5" viewBox="0 0 8.5 4.5"><path d="M0.3 0.3 L4.25 4.3 L8.2 0.3" fill="none" stroke="#d8d8d8" stroke-width="1.2"/></svg>
<div class="a" style="left:99.3px;top:186.5px;width:2px;height:2px;background:#d0d0d0;border-radius:1px"></div>
<div class="a" style="left:99.3px;top:190.5px;width:2px;height:2px;background:#d0d0d0;border-radius:1px"></div>
<div class="a" style="left:99.3px;top:194.5px;width:2px;height:2px;background:#d0d0d0;border-radius:1px"></div>
<div class="a" style="left:108px;top:180px;width:71.5px;height:19.8px;border:1px solid #5a5a5a;border-radius:4px;background:#262626"></div>
<svg style="left:114px;top:185.5px;" width="10" height="9.5" viewBox="0 0 10 9.5"><path d="M0.5 0.5 L9.5 9 M9.5 0.5 L0.5 9" stroke="#8a8a8a" stroke-width="1"/></svg>
<svg style="left:132px;top:185.5px;" width="13" height="9.5" viewBox="0 0 13 9.5"><path d="M0.5 4.5 L4.5 9 L12.5 0.5" fill="none" stroke="#8a8a8a" stroke-width="1"/></svg>
<div class="t" style="left:152.5px;top:181.2px;font-family:'Liberation Serif';font-style:italic;font-size:15px;color:#e8e8e8;transform:scaleX(0.92)">f<span style="font-size:14px">x</span></div>
<svg style="left:170.5px;top:189px;" width="6.5" height="3.3" viewBox="0 0 6.5 3.3"><path d="M0.3 0.3 L3.25 3.0999999999999996 L6.2 0.3" fill="none" stroke="#c8c8c8" stroke-width="1.1"/></svg>
<div class="a" style="left:183px;top:180px;width:1090px;height:19.8px;border:1px solid #5a5a5a;border-radius:4px;background:#262626"></div>
<svg style="left:1261.5px;top:188px;" width="8" height="4.5" viewBox="0 0 8 4.5"><path d="M0.3 0.3 L4.0 4.3 L7.7 0.3" fill="none" stroke="#d8d8d8" stroke-width="1.2"/></svg>
<div class="a" style="left:0px;top:205.5px;width:1262px;height:15.5px;background:#0c0c0c;"></div>
<div class="a" style="left:1151.05px;top:205.5px;width:52.65000000000009px;height:15.5px;background:#6a6a6a;"></div>
<div class="a" style="left:1151.05px;top:219.5px;width:52.65000000000009px;height:1.5px;background:#3f9a6a;"></div>
<div class="a" style="left:105px;top:206px;width:1px;height:15px;background:#3a3a3a;"></div>
<div class="t" style="left:22px;width:83.6px;text-align:center;top:208.77px;font-size:10.5px;color:#d8d8d8">A</div>
<div class="a" style="left:258px;top:206px;width:1px;height:15px;background:#3a3a3a;"></div>
<div class="t" style="left:105.6px;width:153.00000000000003px;text-align:center;top:208.77px;font-size:10.5px;color:#d8d8d8">B</div>
<div class="a" style="left:288px;top:206px;width:1px;height:15px;background:#3a3a3a;"></div>
<div class="t" style="left:258.6px;width:29.799999999999955px;text-align:center;top:208.77px;font-size:10.5px;color:#d8d8d8">C</div>
<div class="a" style="left:351px;top:206px;width:1px;height:15px;background:#3a3a3a;"></div>
<div class="t" style="left:288.4px;width:63.200000000000045px;text-align:center;top:208.77px;font-size:10.5px;color:#d8d8d8">D</div>
<div class="a" style="left:413px;top:206px;width:1px;height:15px;background:#3a3a3a;"></div>
<div class="t" style="left:351.6px;width:61.89999999999998px;text-align:center;top:208.77px;font-size:10.5px;color:#d8d8d8">E</div>
<div class="a" style="left:466px;top:206px;width:1px;height:15px;background:#3a3a3a;"></div>
<div class="t" style="left:413.5px;width:53.10000000000002px;text-align:center;top:208.77px;font-size:10.5px;color:#d8d8d8">F</div>
<div class="a" style="left:519px;top:206px;width:1px;height:15px;background:#3a3a3a;"></div>
<div class="t" style="left:466.6px;width:52.64999999999998px;text-align:center;top:208.77px;font-size:10.5px;color:#d8d8d8">G</div>
<div class="a" style="left:571px;top:206px;width:1px;height:15px;background:#3a3a3a;"></div>
<div class="t" style="left:519.25px;width:52.64999999999998px;text-align:center;top:208.77px;font-size:10.5px;color:#d8d8d8">H</div>
<div class="a" style="left:624px;top:206px;width:1px;height:15px;background:#3a3a3a;"></div>
<div class="t" style="left:571.9px;width:52.64999999999998px;text-align:center;top:208.77px;font-size:10.5px;color:#d8d8d8">I</div>
<div class="a" style="left:677px;top:206px;width:1px;height:15px;background:#3a3a3a;"></div>
<div class="t" style="left:624.55px;width:52.64999999999998px;text-align:center;top:208.77px;font-size:10.5px;color:#d8d8d8">J</div>
<div class="a" style="left:729px;top:206px;width:1px;height:15px;background:#3a3a3a;"></div>
<div class="t" style="left:677.1999999999999px;width:52.64999999999998px;text-align:center;top:208.77px;font-size:10.5px;color:#d8d8d8">K</div>
<div class="a" style="left:782px;top:206px;width:1px;height:15px;background:#3a3a3a;"></div>
<div class="t" style="left:729.8499999999999px;width:52.64999999999998px;text-align:center;top:208.77px;font-size:10.5px;color:#d8d8d8">L</div>
<div class="a" style="left:835px;top:206px;width:1px;height:15px;background:#3a3a3a;"></div>
<div class="t" style="left:782.4999999999999px;width:52.64999999999998px;text-align:center;top:208.77px;font-size:10.5px;color:#d8d8d8">M</div>
<div class="a" style="left:887px;top:206px;width:1px;height:15px;background:#3a3a3a;"></div>
<div class="t" style="left:835.1499999999999px;width:52.64999999999998px;text-align:center;top:208.77px;font-size:10.5px;color:#d8d8d8">N</div>
<div class="a" style="left:940px;top:206px;width:1px;height:15px;background:#3a3a3a;"></div>
<div class="t" style="left:887.7999999999998px;width:52.64999999999998px;text-align:center;top:208.77px;font-size:10.5px;color:#d8d8d8">O</div>
<div class="a" style="left:993px;top:206px;width:1px;height:15px;background:#3a3a3a;"></div>
<div class="t" style="left:940.4499999999998px;width:52.64999999999998px;text-align:center;top:208.77px;font-size:10.5px;color:#d8d8d8">P</div>
<div class="a" style="left:1045px;top:206px;width:1px;height:15px;background:#3a3a3a;"></div>
<div class="t" style="left:993.0999999999998px;width:52.64999999999998px;text-align:center;top:208.77px;font-size:10.5px;color:#d8d8d8">Q</div>
<div class="a" style="left:1098px;top:206px;width:1px;height:15px;background:#3a3a3a;"></div>
<div class="t" style="left:1045.7499999999998px;width:52.65000000000009px;text-align:center;top:208.77px;font-size:10.5px;color:#d8d8d8">R</div>
<div class="a" style="left:1151px;top:206px;width:1px;height:15px;background:#3a3a3a;"></div>
<div class="t" style="left:1098.3999999999999px;width:52.65000000000009px;text-align:center;top:208.77px;font-size:10.5px;color:#d8d8d8">S</div>
<div class="a" style="left:1203px;top:206px;width:1px;height:15px;background:#3a3a3a;"></div>
<div class="t" style="left:1151.05px;width:52.65000000000009px;text-align:center;top:208.77px;font-size:10.5px;color:#d8d8d8">T</div>
<div class="a" style="left:1256px;top:206px;width:1px;height:15px;background:#3a3a3a;"></div>
<div class="t" style="left:1203.7px;width:52.65000000000009px;text-align:center;top:208.77px;font-size:10.5px;color:#d8d8d8">U</div>
<svg style="left:9px;top:208px;" width="11" height="11" viewBox="0 0 11 11"><path d="M10.5 0.5 V10.5 H0.5 Z" fill="#6e6e6e"/></svg>
<div class="a" style="left:22px;top:206px;width:1px;height:15px;background:#3a3a3a;"></div>
<div class="a" style="left:22px;top:221px;width:1241.3px;height:414.6px;background:#ffffff;"></div>
<div class="a" style="left:22px;top:237px;width:1241.3px;height:1px;background:#e3e3e3;"></div>
<div class="a" style="left:22px;top:253px;width:1241.3px;height:1px;background:#e3e3e3;"></div>
<div class="a" style="left:22px;top:269px;width:1241.3px;height:1px;background:#e3e3e3;"></div>
<div class="a" style="left:22px;top:285px;width:1241.3px;height:1px;background:#e3e3e3;"></div>
<div class="a" style="left:22px;top:301px;width:1241.3px;height:1px;background:#e3e3e3;"></div>
<div class="a" style="left:22px;top:317px;width:1241.3px;height:1px;background:#e3e3e3;"></div>
<div class="a" style="left:22px;top:333px;width:1241.3px;height:1px;background:#e3e3e3;"></div>
<div class="a" style="left:22px;top:349px;width:1241.3px;height:1px;background:#e3e3e3;"></div>
<div class="a" style="left:22px;top:365px;width:1241.3px;height:1px;background:#e3e3e3;"></div>
<div class="a" style="left:22px;top:381px;width:1241.3px;height:1px;background:#e3e3e3;"></div>
<div class="a" style="left:22px;top:397px;width:1241.3px;height:1px;background:#e3e3e3;"></div>
<div class="a" style="left:22px;top:413px;width:1241.3px;height:1px;background:#e3e3e3;"></div>
<div class="a" style="left:22px;top:429px;width:1241.3px;height:1px;background:#e3e3e3;"></div>
<div class="a" style="left:22px;top:445px;width:1241.3px;height:1px;background:#e3e3e3;"></div>
<div class="a" style="left:22px;top:461px;width:1241.3px;height:1px;background:#e3e3e3;"></div>
<div class="a" style="left:22px;top:477px;width:1241.3px;height:1px;background:#e3e3e3;"></div>
<div class="a" style="left:22px;top:493px;width:1241.3px;height:1px;background:#e3e3e3;"></div>
<div class="a" style="left:22px;top:509px;width:1241.3px;height:1px;background:#e3e3e3;"></div>
<div class="a" style="left:22px;top:525px;width:1241.3px;height:1px;background:#e3e3e3;"></div>
<div class="a" style="left:22px;top:541px;width:1241.3px;height:1px;background:#e3e3e3;"></div>
<div class="a" style="left:22px;top:557px;width:1241.3px;height:1px;background:#e3e3e3;"></div>
<div class="a" style="left:22px;top:573px;width:1241.3px;height:1px;background:#e3e3e3;"></div>
<div class="a" style="left:22px;top:589px;width:1241.3px;height:1px;background:#e3e3e3;"></div>
<div class="a" style="left:22px;top:605px;width:1241.3px;height:1px;background:#e3e3e3;"></div>
<div class="a" style="left:22px;top:621px;width:1241.3px;height:1px;background:#e3e3e3;"></div>
<div class="a" style="left:105px;top:221px;width:1px;height:415px;background:#e3e3e3;"></div>
<div class="a" style="left:258px;top:221px;width:1px;height:415px;background:#e3e3e3;"></div>
<div class="a" style="left:288px;top:221px;width:1px;height:415px;background:#e3e3e3;"></div>
<div class="a" style="left:351px;top:221px;width:1px;height:415px;background:#e3e3e3;"></div>
<div class="a" style="left:413px;top:221px;width:1px;height:415px;background:#e3e3e3;"></div>
<div class="a" style="left:466px;top:221px;width:1px;height:415px;background:#e3e3e3;"></div>
<div class="a" style="left:519px;top:221px;width:1px;height:415px;background:#e3e3e3;"></div>
<div class="a" style="left:571px;top:221px;width:1px;height:415px;background:#e3e3e3;"></div>
<div class="a" style="left:624px;top:221px;width:1px;height:415px;background:#e3e3e3;"></div>
<div class="a" style="left:677px;top:221px;width:1px;height:415px;background:#e3e3e3;"></div>
<div class="a" style="left:729px;top:221px;width:1px;height:415px;background:#e3e3e3;"></div>
<div class="a" style="left:782px;top:221px;width:1px;height:415px;background:#e3e3e3;"></div>
<div class="a" style="left:835px;top:221px;width:1px;height:415px;background:#e3e3e3;"></div>
<div class="a" style="left:887px;top:221px;width:1px;height:415px;background:#e3e3e3;"></div>
<div class="a" style="left:940px;top:221px;width:1px;height:415px;background:#e3e3e3;"></div>
<div class="a" style="left:993px;top:221px;width:1px;height:415px;background:#e3e3e3;"></div>
<div class="a" style="left:1045px;top:221px;width:1px;height:415px;background:#e3e3e3;"></div>
<div class="a" style="left:1098px;top:221px;width:1px;height:415px;background:#e3e3e3;"></div>
<div class="a" style="left:1151px;top:221px;width:1px;height:415px;background:#e3e3e3;"></div>
<div class="a" style="left:1203px;top:221px;width:1px;height:415px;background:#e3e3e3;"></div>
<div class="a" style="left:1256px;top:221px;width:1px;height:415px;background:#e3e3e3;"></div>
<div class="a" style="left:0px;top:221px;width:22px;height:415px;background:#0c0c0c;"></div>
<div class="a" style="left:0px;top:349px;width:22px;height:16px;background:#6a6a6a;"></div>
<div class="a" style="left:0px;top:237px;width:22px;height:1px;background:#2e2e2e;"></div>
<div class="t" style="left:0;width:23px;text-align:center;top:226.00px;font-size:10px;color:#eeeeee">1</div>
<div class="a" style="left:0px;top:253px;width:22px;height:1px;background:#2e2e2e;"></div>
<div class="t" style="left:0;width:23px;text-align:center;top:242.00px;font-size:10px;color:#eeeeee">2</div>
<div class="a" style="left:0px;top:269px;width:22px;height:1px;background:#2e2e2e;"></div>
<div class="t" style="left:0;width:23px;text-align:center;top:258.00px;font-size:10px;color:#eeeeee">3</div>
<div class="a" style="left:0px;top:285px;width:22px;height:1px;background:#2e2e2e;"></div>
<div class="t" style="left:0;width:23px;text-align:center;top:274.00px;font-size:10px;color:#eeeeee">4</div>
<div class="a" style="left:0px;top:301px;width:22px;height:1px;background:#2e2e2e;"></div>
<div class="t" style="left:0;width:23px;text-align:center;top:290.00px;font-size:10px;color:#eeeeee">5</div>
<div class="a" style="left:0px;top:317px;width:22px;height:1px;background:#2e2e2e;"></div>
<div class="t" style="left:0;width:23px;text-align:center;top:306.00px;font-size:10px;color:#eeeeee">6</div>
<div class="a" style="left:0px;top:333px;width:22px;height:1px;background:#2e2e2e;"></div>
<div class="t" style="left:0;width:23px;text-align:center;top:322.00px;font-size:10px;color:#eeeeee">7</div>
<div class="a" style="left:0px;top:349px;width:22px;height:1px;background:#2e2e2e;"></div>
<div class="t" style="left:0;width:23px;text-align:center;top:338.00px;font-size:10px;color:#eeeeee">8</div>
<div class="a" style="left:0px;top:365px;width:22px;height:1px;background:#2e2e2e;"></div>
<div class="t" style="left:0;width:23px;text-align:center;top:354.00px;font-size:10px;color:#eeeeee">9</div>
<div class="a" style="left:0px;top:381px;width:22px;height:1px;background:#2e2e2e;"></div>
<div class="t" style="left:0;width:23px;text-align:center;top:370.00px;font-size:10px;color:#eeeeee">10</div>
<div class="a" style="left:0px;top:397px;width:22px;height:1px;background:#2e2e2e;"></div>
<div class="t" style="left:0;width:23px;text-align:center;top:386.00px;font-size:10px;color:#eeeeee">11</div>
<div class="a" style="left:0px;top:413px;width:22px;height:1px;background:#2e2e2e;"></div>
<div class="t" style="left:0;width:23px;text-align:center;top:402.00px;font-size:10px;color:#eeeeee">12</div>
<div class="a" style="left:0px;top:429px;width:22px;height:1px;background:#2e2e2e;"></div>
<div class="t" style="left:0;width:23px;text-align:center;top:418.00px;font-size:10px;color:#eeeeee">13</div>
<div class="a" style="left:0px;top:445px;width:22px;height:1px;background:#2e2e2e;"></div>
<div class="t" style="left:0;width:23px;text-align:center;top:434.00px;font-size:10px;color:#eeeeee">14</div>
<div class="a" style="left:0px;top:461px;width:22px;height:1px;background:#2e2e2e;"></div>
<div class="t" style="left:0;width:23px;text-align:center;top:450.00px;font-size:10px;color:#eeeeee">15</div>
<div class="a" style="left:0px;top:477px;width:22px;height:1px;background:#2e2e2e;"></div>
<div class="t" style="left:0;width:23px;text-align:center;top:466.00px;font-size:10px;color:#eeeeee">16</div>
<div class="a" style="left:0px;top:493px;width:22px;height:1px;background:#2e2e2e;"></div>
<div class="t" style="left:0;width:23px;text-align:center;top:482.00px;font-size:10px;color:#eeeeee">17</div>
<div class="a" style="left:0px;top:509px;width:22px;height:1px;background:#2e2e2e;"></div>
<div class="t" style="left:0;width:23px;text-align:center;top:498.00px;font-size:10px;color:#eeeeee">18</div>
<div class="a" style="left:0px;top:525px;width:22px;height:1px;background:#2e2e2e;"></div>
<div class="t" style="left:0;width:23px;text-align:center;top:514.00px;font-size:10px;color:#eeeeee">19</div>
<div class="a" style="left:0px;top:541px;width:22px;height:1px;background:#2e2e2e;"></div>
<div class="t" style="left:0;width:23px;text-align:center;top:530.00px;font-size:10px;color:#eeeeee">20</div>
<div class="a" style="left:0px;top:557px;width:22px;height:1px;background:#2e2e2e;"></div>
<div class="t" style="left:0;width:23px;text-align:center;top:546.00px;font-size:10px;color:#eeeeee">21</div>
<div class="a" style="left:0px;top:573px;width:22px;height:1px;background:#2e2e2e;"></div>
<div class="t" style="left:0;width:23px;text-align:center;top:562.00px;font-size:10px;color:#eeeeee">22</div>
<div class="a" style="left:0px;top:589px;width:22px;height:1px;background:#2e2e2e;"></div>
<div class="t" style="left:0;width:23px;text-align:center;top:578.00px;font-size:10px;color:#eeeeee">23</div>
<div class="a" style="left:0px;top:605px;width:22px;height:1px;background:#2e2e2e;"></div>
<div class="t" style="left:0;width:23px;text-align:center;top:594.00px;font-size:10px;color:#eeeeee">24</div>
<div class="a" style="left:0px;top:621px;width:22px;height:1px;background:#2e2e2e;"></div>
<div class="t" style="left:0;width:23px;text-align:center;top:610.00px;font-size:10px;color:#eeeeee">25</div>
<div class="a" style="left:0px;top:637px;width:22px;height:1px;background:#2e2e2e;"></div>
<div class="t" style="left:0;width:23px;text-align:center;top:626.00px;font-size:10px;color:#eeeeee">26</div>
<div class="a" style="left:21.5px;top:349px;width:1px;height:16px;background:#3f9a6a;"></div>
<div class="a" style="left:22px;top:221px;width:236px;height:81px;background:#ffffff;"></div>
<div class="a" style="left:22px;top:365px;width:236px;height:81px;background:#ffffff;"></div>
<div class="a" style="left:22px;top:509px;width:391px;height:81px;background:#ffffff;"></div>
<div class="a" style="left:22px;top:221px;width:236.10000000000002px;height:16px;background:#c0e5f6;"></div>
<div class="a" style="left:22px;top:285px;width:236.10000000000002px;height:16px;background:#c0e5f6;"></div>
<div class="a" style="left:22px;top:285px;width:236.6px;height:1px;background:#a4cfe4;"></div>
<div class="t" style="left:25.30px;top:225.66px;font-size:10.4px;font-weight:bold;color:#02080e;transform:scaleX(0.9486);">Row Labels</div>
<div class="a" style="left:91.7px;top:222.5px;width:13.5px;height:12.8px;background:#fafafa;border:1px solid #b8c8d0"></div>
<svg style="left:96.0px;top:227.3px;" width="6" height="4" viewBox="0 0 6 4"><path d="M0 0 H5.5 L2.75 3 Z" fill="#6a6a6a"/></svg>
<div class="t" style="left:108.70px;top:225.66px;font-size:10.4px;font-weight:bold;color:#02080e;transform:scaleX(0.9455);">Count of Churn Label</div>
<div class="t" style="left:25.30px;top:241.66px;font-size:10.4px;color:#141414;transform:scaleX(1.0487);">Month-to-Month</div>
<div class="t" style="left:228.90px;top:241.66px;font-size:10.4px;color:#141414;transform:scaleX(1.0684);">3,411</div>
<div class="t" style="left:25.30px;top:257.66px;font-size:10.4px;color:#141414;transform:scaleX(1.0837);">One Year</div>
<div class="t" style="left:228.90px;top:257.66px;font-size:10.4px;color:#141414;transform:scaleX(1.0364);">1,479</div>
<div class="t" style="left:25.30px;top:273.66px;font-size:10.4px;color:#141414;transform:scaleX(1.0982);">Two Year</div>
<div class="t" style="left:228.90px;top:273.66px;font-size:10.4px;color:#141414;transform:scaleX(1.0364);">1,797</div>
<div class="t" style="left:25.30px;top:289.66px;font-size:10.4px;font-weight:bold;color:#02080e;transform:scaleX(0.9815);">Grand Total</div>
<div class="t" style="left:229.20px;top:289.66px;font-size:10.4px;font-weight:bold;color:#02080e;transform:scaleX(1.0249);">6,687</div>
<div class="a" style="left:22px;top:365px;width:236.10000000000002px;height:16px;background:#c0e5f6;"></div>
<div class="a" style="left:22px;top:429px;width:236.10000000000002px;height:16px;background:#c0e5f6;"></div>
<div class="a" style="left:22px;top:429px;width:236.6px;height:1px;background:#a4cfe4;"></div>
<div class="t" style="left:25.30px;top:369.66px;font-size:10.4px;font-weight:bold;color:#02080e;transform:scaleX(0.9486);">Row Labels</div>
<div class="a" style="left:91.7px;top:366.5px;width:13.5px;height:12.8px;background:#fafafa;border:1px solid #b8c8d0"></div>
<svg style="left:96.0px;top:371.3px;" width="6" height="4" viewBox="0 0 6 4"><path d="M0 0 H5.5 L2.75 3 Z" fill="#6a6a6a"/></svg>
<div class="t" style="left:108.70px;top:369.66px;font-size:10.4px;font-weight:bold;color:#02080e;transform:scaleX(0.9723);">Distinct Count of Customer ID</div>
<div class="t" style="left:25.30px;top:385.66px;font-size:10.4px;color:#141414;transform:scaleX(1.0226);">Credit Card</div>
<div class="t" style="left:228.90px;top:385.66px;font-size:10.4px;color:#141414;transform:scaleX(1.0364);">2,614</div>
<div class="t" style="left:25.30px;top:401.66px;font-size:10.4px;color:#141414;transform:scaleX(1.0361);">Direct Debit</div>
<div class="t" style="left:228.90px;top:401.66px;font-size:10.4px;color:#141414;transform:scaleX(1.0364);">3,702</div>
<div class="t" style="left:25.30px;top:417.66px;font-size:10.4px;color:#141414;transform:scaleX(1.0156);">Paper Check</div>
<div class="t" style="left:238.70px;top:417.66px;font-size:10.4px;color:#141414;transform:scaleX(0.9903);">371</div>
<div class="t" style="left:25.30px;top:433.66px;font-size:10.4px;font-weight:bold;color:#02080e;transform:scaleX(0.9815);">Grand Total</div>
<div class="t" style="left:229.20px;top:433.66px;font-size:10.4px;font-weight:bold;color:#02080e;transform:scaleX(1.0249);">6,687</div>
<div class="a" style="left:22px;top:509px;width:391.0px;height:16px;background:#c0e5f6;"></div>
<div class="a" style="left:22px;top:525px;width:391.0px;height:16px;background:#c0e5f6;"></div>
<div class="a" style="left:22px;top:573px;width:391.0px;height:16px;background:#c0e5f6;"></div>
<div class="a" style="left:22px;top:541px;width:391.5px;height:1px;background:#a4cfe4;"></div>
<div class="a" style="left:22px;top:573px;width:391.5px;height:1px;background:#a4cfe4;"></div>
<div class="t" style="left:25.30px;top:513.66px;font-size:10.4px;font-weight:bold;color:#02080e;transform:scaleX(0.9579);">Count of Gender</div>
<div class="t" style="left:108.70px;top:513.66px;font-size:10.4px;font-weight:bold;color:#02080e;transform:scaleX(0.9709);">Column Labels</div>
<div class="a" style="left:244.5px;top:510.5px;width:13.5px;height:12.8px;background:#fafafa;border:1px solid #b8c8d0"></div>
<svg style="left:248.8px;top:515.3px;" width="6" height="4" viewBox="0 0 6 4"><path d="M0 0 H5.5 L2.75 3 Z" fill="#6a6a6a"/></svg>
<div class="t" style="left:25.30px;top:529.66px;font-size:10.4px;font-weight:bold;color:#02080e;transform:scaleX(0.9486);">Row Labels</div>
<div class="a" style="left:91.7px;top:526.5px;width:13.5px;height:12.8px;background:#fafafa;border:1px solid #b8c8d0"></div>
<svg style="left:96.0px;top:531.3px;" width="6" height="4" viewBox="0 0 6 4"><path d="M0 0 H5.5 L2.75 3 Z" fill="#6a6a6a"/></svg>
<div class="t" style="left:108.70px;top:529.66px;font-size:10.4px;font-weight:bold;color:#02080e;transform:scaleX(1.0271);">Female</div>
<div class="t" style="left:261.30px;top:529.66px;font-size:10.4px;font-weight:bold;color:#02080e;transform:scaleX(0.9896);">Male</div>
<div class="t" style="left:291.30px;top:529.66px;font-size:10.4px;font-weight:bold;color:#02080e;transform:scaleX(0.9462);">Prefer not to</div>
<div class="t" style="left:353.60px;top:529.66px;font-size:10.4px;font-weight:bold;color:#02080e;transform:scaleX(0.9902);">Grand Total</div>
<div class="t" style="left:25.30px;top:545.66px;font-size:10.4px;color:#141414;">No</div>
<div class="t" style="left:232.40px;top:545.66px;font-size:10.4px;color:#141414;transform:scaleX(1.0069);">2404</div>
<div class="t" style="left:262.40px;top:545.66px;font-size:10.4px;color:#141414;transform:scaleX(1.0069);">2482</div>
<div class="t" style="left:343.70px;top:545.66px;font-size:10.4px;color:#141414;transform:scaleX(0.8663);">5</div>
<div class="t" style="left:388.00px;top:545.66px;font-size:10.4px;color:#141414;transform:scaleX(1.0069);">4891</div>
<div class="t" style="left:25.30px;top:561.66px;font-size:10.4px;color:#141414;">Yes</div>
<div class="t" style="left:238.50px;top:561.66px;font-size:10.4px;color:#141414;transform:scaleX(0.9903);">897</div>
<div class="t" style="left:268.50px;top:561.66px;font-size:10.4px;color:#141414;transform:scaleX(0.9903);">897</div>
<div class="t" style="left:343.70px;top:561.66px;font-size:10.4px;color:#141414;transform:scaleX(0.8663);">2</div>
<div class="t" style="left:388.00px;top:561.66px;font-size:10.4px;color:#141414;transform:scaleX(1.0069);">1796</div>
<div class="t" style="left:25.30px;top:577.66px;font-size:10.4px;font-weight:bold;color:#02080e;transform:scaleX(0.9815);">Grand Total</div>
<div class="t" style="left:232.40px;top:577.66px;font-size:10.4px;font-weight:bold;color:#02080e;transform:scaleX(1.0069);">3301</div>
<div class="t" style="left:262.40px;top:577.66px;font-size:10.4px;font-weight:bold;color:#02080e;transform:scaleX(1.0069);">3379</div>
<div class="t" style="left:343.70px;top:577.66px;font-size:10.4px;font-weight:bold;color:#02080e;transform:scaleX(0.8663);">7</div>
<div class="t" style="left:388.00px;top:577.66px;font-size:10.4px;font-weight:bold;color:#02080e;transform:scaleX(1.0069);">6687</div>
<div class="a" style="left:1150px;top:348px;width:55px;height:18px;border:2px solid #2a5c3d"></div>
<div class="a" style="left:1201.8px;top:363.4px;width:4px;height:4px;background:#2a5c3d;"></div>
<div class="a" style="left:1263.3px;top:205.5px;width:16.7px;height:430.5px;background:#0c0c0c;"></div>
<svg style="left:1268px;top:209.5px;" width="8" height="6" viewBox="0 0 8 6"><path d="M0 5.5 L4 0.5 L7.6 5.5 Z" fill="#bdbdbd"/></svg>
<div class="a" style="left:1268px;top:218.5px;width:7px;height:154px;background:#a0a0a0;border-radius:3.5px"></div>
<svg style="left:1267.7px;top:627.8px;" width="8" height="6" viewBox="0 0 8 6"><path d="M0 0.3 L4 5.4 L8 0.3 Z" fill="#bdbdbd"/></svg>
<div class="a" style="left:0px;top:636px;width:1280px;height:26px;background:#1a1b18;"></div>
<svg style="left:21px;top:644px;" width="6" height="9" viewBox="0 0 6 9"><path d="M5 0.5 L1.2 4.2 L5 8" fill="none" stroke="#b8b8b8" stroke-width="1.1"/></svg>
<svg style="left:48.5px;top:644px;" width="6" height="9" viewBox="0 0 6 9"><path d="M1 0.5 L4.8 4.2 L1 8" fill="none" stroke="#b8b8b8" stroke-width="1.1"/></svg>
<div class="t" style="left:101.50px;top:644.39px;font-size:11.3px;color:#e0e0e0;transform:scaleX(0.9791);">Databel_-_Data(1)</div>
<div class="a" style="left:203px;top:640px;width:1px;height:16px;background:#4a4a4a;"></div>
<svg style="left:200px;top:636px" width="94" height="24" viewBox="0 0 94 24">
<path d="M0 0 Q7 0 7 6 V18 Q7 23 12 23 H81 Q86 23 86 18 V6 Q86 0 93 0 Z" fill="#ffffff"/></svg>
<div class="t" style="left:214.80px;top:641.00px;font-size:11.3px;color:#1e1e1e;transform:scaleX(1.0438);">Pivot Tables</div>
<div class="a" style="left:214px;top:655.3px;width:64.5px;height:2px;background:#3c8c7a;border-radius:1px"></div>
<div class="a" style="left:288px;top:640px;width:1px;height:16px;background:#4a4a4a;"></div>
<div class="t" style="left:299.75px;top:643.89px;font-size:11.3px;color:#dcdcdc;transform:scaleX(0.9857);">DashBoard</div>
<div class="a" style="left:367px;top:640px;width:1px;height:16px;background:#4a4a4a;"></div>
<svg style="left:402px;top:643px;" width="11" height="11" viewBox="0 0 11 11"><path d="M5.5 0.5 V10.5 M0.5 5.5 H10.5" stroke="#e0e0e0" stroke-width="1.3"/></svg>
<div class="a" style="left:769.3px;top:644.5px;width:2px;height:2px;background:#e0e0e0;border-radius:1px"></div>
<div class="a" style="left:769.3px;top:647.5px;width:2px;height:2px;background:#e0e0e0;border-radius:1px"></div>
<div class="a" style="left:769.3px;top:650.5px;width:2px;height:2px;background:#e0e0e0;border-radius:1px"></div>
<div class="a" style="left:784px;top:642px;width:482px;height:12px;background:#0e0e0e;border-radius:6px"></div>
<svg style="left:787.7px;top:645px;" width="6" height="7.3" viewBox="0 0 6 7.3"><path d="M0 3.65 L6 0 V7.3 Z" fill="#bdbdbd"/></svg>
<div class="a" style="left:797.6px;top:644.5px;width:436px;height:7.5px;background:#a8a8a8;border-radius:3.75px"></div>
<svg style="left:1255px;top:645px;" width="6" height="7.3" viewBox="0 0 6 7.3"><path d="M6 3.65 L0 0 V7.3 Z" fill="#bdbdbd"/></svg>
<div class="a" style="left:0px;top:661.5px;width:1280px;height:1px;background:#3a3a3a;"></div>
<div class="a" style="left:0px;top:662.5px;width:1280px;height:17.5px;background:#171717;"></div>
<div class="a" style="left:0px;top:679.5px;width:1280px;height:1px;background:#2e2e2c;"></div>
<div class="t" style="left:9.40px;top:666.84px;font-size:9.6px;color:#dedede;transform:scaleX(0.8578);">Ready</div>
<svg style="left:51px;top:665px;" width="13" height="13" viewBox="0 0 13 13"><circle cx="6.5" cy="2" r="1.6" fill="none" stroke="#d0d0d0" stroke-width="1"/>
<path d="M1 4.5 H12 M6.5 4.5 V8 M3.5 12.5 L6.5 8 L9.5 12.5" fill="none" stroke="#d0d0d0" stroke-width="1"/>
<path d="M7.5 8.5 L12.5 12.8 M12.5 8.5 L7.5 12.8" stroke="#d0d0d0" stroke-width="1"/></svg>
<div class="t" style="left:65.60px;top:666.84px;font-size:9.6px;font-weight:bold;color:#eaeaea;transform:scaleX(0.8839);">Accessibility: Investigate</div>
<div class="a" style="left:1031.6px;top:663px;width:33.2px;height:16.6px;background:#262626;"></div>
<svg style="left:1041.5px;top:665.5px;" width="12" height="11.5" viewBox="0 0 12 11.5"><rect x="0" y="0" width="12" height="11.5" rx="1" fill="#e8e8e8"/><g fill="#1a1a1a"><rect x="2" y="2" width="2" height="2"/><rect x="5" y="2" width="2" height="2"/><rect x="8" y="2" width="2" height="2"/><rect x="2" y="4.8" width="2" height="2"/><rect x="5" y="4.8" width="2" height="2"/><rect x="8" y="4.8" width="2" height="2"/><rect x="2" y="7.6" width="2" height="2"/><rect x="5" y="7.6" width="2" height="2"/><rect x="8" y="7.6" width="2" height="2"/></g></svg>
<svg style="left:1075px;top:665px;" width="13" height="12" viewBox="0 0 13 12"><rect x="0.6" y="0.6" width="11.8" height="10.8" rx="1" fill="none" stroke="#d8d8d8" stroke-width="1.2"/><rect x="3.2" y="2.6" width="6.6" height="6.8" fill="none" stroke="#d8d8d8" stroke-width="1"/><path d="M4.5 5 H8.5 M4.5 7 H8.5" stroke="#d8d8d8" stroke-width="0.8"/></svg>
<svg style="left:1108.5px;top:665px;" width="13" height="12" viewBox="0 0 13 12"><path d="M0.6 0.6 H11.4 V11.4 H0.6 Z M3.8 0.6 V5.5 M7 0.6 V5.5" fill="none" stroke="#d8d8d8" stroke-width="1.2"/></svg>
<div class="a" style="left:1137px;top:670.5px;width:5px;height:1px;background:#bdbdbd;"></div>
<div class="a" style="left:1147px;top:670.5px;width:83px;height:1px;background:#8a8a8a;"></div>
<div class="a" style="left:1187px;top:666px;width:3px;height:10px;background:#d8d8d8;"></div>
<svg style="left:1235px;top:667px;" width="7" height="7" viewBox="0 0 7 7"><path d="M3.5 0 V7 M0 3.5 H7" stroke="#bdbdbd" stroke-width="1"/></svg>
<div class="t" style="left:1251.00px;top:667.35px;font-size:9px;color:#d8d8d8;transform:scaleX(0.9444);">99%</div>
<div class="a" style="left:0;top:680.5px;width:1280px;height:39.5px;background:linear-gradient(90deg,#25231c 0%,#22231b 20%,#1f211c 45%,#1e1f1b 100%)"></div>
<div class="a" style="left:19px;top:692px;width:16.5px;height:16.5px;border-radius:50%;background:radial-gradient(circle at 40% 35%,#f8b23a,#ee7a1a)"></div>
<div class="a" style="left:26px;top:685px;width:13px;height:13px;border-radius:50%;background:#f4a4b4"></div>
<div class="t" style="left:30.00px;top:687.85px;font-size:9px;color:#5a2030;transform:scaleX(1.0010);">2</div>
<div class="t" style="left:43.00px;top:688.58px;font-size:10.5px;color:#f0f0f0;transform:scaleX(0.9162);">28°C</div>
<svg style="left:42px;top:702px;" width="34" height="12" viewBox="0 0 34 12"><g fill="none" stroke="#d8d8d8" stroke-width="1.3"><path d="M2 6 Q1.3 10.5 4.5 10.5 Q7 10.5 7 6.5"/><path d="M7 7.5 H31.5"/><path d="M10 4.8 V7.5 M13.5 4.8 V7.5 M21 4.8 V7.5 M24 4.8 V7.5 M27 4.8 V7.5"/><ellipse cx="16.5" cy="6.3" rx="2" ry="1.3"/><ellipse cx="29.5" cy="6.2" rx="2.3" ry="1.4"/></g><circle cx="22.5" cy="2.6" r="0.8" fill="#d8d8d8"/></svg>
<svg style="left:335px;top:691px;" width="20" height="20" viewBox="0 0 20 20"><defs><linearGradient id="wg" x1="0" y1="0" x2="1" y2="1"><stop offset="0" stop-color="#7fe0ff"/><stop offset="1" stop-color="#1d9ae6"/></linearGradient></defs>
<rect x="0" y="0" width="9.5" height="9.5" rx="1" fill="url(#wg)"/><rect x="10.5" y="0" width="9.5" height="9.5" rx="1" fill="url(#wg)"/>
<rect x="0" y="10.5" width="9.5" height="9.5" rx="1" fill="url(#wg)"/><rect x="10.5" y="10.5" width="9.5" height="9.5" rx="1" fill="url(#wg)"/></svg>
<div class="a" style="left:365.5px;top:687px;width:183.5px;height:27px;border-radius:14px;background:#3a3b36"></div>
<svg style="left:375px;top:693px;" width="13" height="14" viewBox="0 0 13 14"><circle cx="5.5" cy="5.5" r="4.5" fill="none" stroke="#e8e8e8" stroke-width="1.5"/><path d="M8.8 8.8 L12.5 12.8" stroke="#e8e8e8" stroke-width="1.6"/></svg>
<div class="t" style="left:396.00px;top:695.23px;font-size:11.5px;color:#d8d8d8;transform:scaleX(0.9327);">Search</div>
<svg style="left:560px;top:690px;" width="22" height="22" viewBox="0 0 22 22"><rect x="0" y="7" width="13" height="13" rx="1.5" fill="#6a6a6a"/><rect x="7" y="2" width="13" height="13" rx="1.5" fill="#d8d8d8"/><rect x="7" y="2" width="6" height="6" fill="#f4f4f4"/></svg>
<svg style="left:596px;top:690px;" width="21" height="20" viewBox="0 0 21 20"><defs>
<linearGradient id="cp1" x1="0" y1="0" x2="0.3" y2="1"><stop offset="0" stop-color="#38b8f0"/><stop offset="0.55" stop-color="#4ad07a"/><stop offset="1" stop-color="#f2d02a"/></linearGradient>
<linearGradient id="cp2" x1="0.2" y1="0" x2="0" y2="1"><stop offset="0" stop-color="#b070f0"/><stop offset="0.5" stop-color="#f050a0"/><stop offset="1" stop-color="#ff8a3a"/></linearGradient>
<radialGradient id="eg" cx="0.3" cy="0.75" r="0.9"><stop offset="0" stop-color="#1a6fe0"/><stop offset="0.6" stop-color="#2aa0e8"/><stop offset="1" stop-color="#40d0c0"/></radialGradient></defs>
<path d="M4 1.5 Q5 0.5 7 0.5 H10 Q11.5 0.5 11 2 L7 13 Q6.5 14 5 14 H2 Q0.5 14 1 12.5 Z" fill="url(#cp1)"/>
<path d="M10 5.5 Q10.5 4.5 12 4.5 H17.5 Q19.5 4.5 19 6.5 L15 17 Q14.5 18 13 18 H6 Q4.5 18 5.5 16 Z" fill="url(#cp2)"/></svg>
<svg style="left:633px;top:690px;" width="21" height="21" viewBox="0 0 21 21"><circle cx="10" cy="10" r="9.5" fill="url(#eg)"/>
<path d="M10 0.5 A9.5 9.5 0 0 1 19.5 10 Q17 13 13 12 Q16 8 12 6 Q7 4.5 4 8 Q5 2 10 0.5 Z" fill="#3ed28a"/>
<path d="M10 0.5 Q5 2 4 8 Q7 4.5 12 6 Q14 3 10 0.5 Z" fill="#30c0d8"/>
<circle cx="10" cy="10" r="2.6" fill="#1b1c18"/></svg>
<svg style="left:668px;top:691px;" width="22" height="19" viewBox="0 0 22 19"><path d="M0 3 Q0 1 2 1 H8 L10 3 H20 Q22 3 22 5 V17 Q22 19 20 19 H2 Q0 19 0 17 Z" fill="#f2c744"/><path d="M0 6 H22 V17 Q22 19 20 19 H2 Q0 19 0 17 Z" fill="#fad55c"/><rect x="6" y="10" width="10" height="7" rx="1" fill="#2a80d8"/></svg>
<div class="a" style="left:675px;top:714px;width:8px;height:2px;background:#9a9a9a;border-radius:1px"></div>
<svg style="left:705px;top:689px;" width="21" height="21" viewBox="0 0 21 21"><path d="M6 5 Q6 1 10.5 1 Q15 1 15 5" fill="none" stroke="#4aa8f0" stroke-width="1.5"/>
<rect x="0.5" y="5" width="20" height="15" rx="2" fill="#f0f0f0"/>
<rect x="6" y="9" width="4" height="4" fill="#f35325"/><rect x="11" y="9" width="4" height="4" fill="#81bc06"/><rect x="6" y="14" width="4" height="4" fill="#05a6f0"/><rect x="11" y="14" width="4" height="4" fill="#ffba08"/></svg>
<svg style="left:742px;top:689px;" width="22" height="22" viewBox="0 0 22 22"><circle cx="11" cy="11" r="10.5" fill="#db4437"/>
<path d="M11 11 L20.1 5.75 A10.5 10.5 0 0 1 11 21.5 Z" fill="#f4c20d"/>
<path d="M11 11 L11 21.5 A10.5 10.5 0 0 1 1.9 5.75 Z" fill="#0f9d58"/>
<circle cx="11" cy="11" r="5" fill="#fff"/><circle cx="11" cy="11" r="3.9" fill="#4285f4"/></svg>
<svg style="left:779px;top:689px;" width="21" height="21" viewBox="0 0 21 21"><rect x="0" y="0" width="21" height="21" fill="#1c3faa"/><path d="M7.5 5 V15.5 H14" fill="none" stroke="#fff" stroke-width="2.6"/></svg>
<svg style="left:816px;top:690px;" width="21" height="21" viewBox="0 0 21 21"><path d="M15 1.5 L2 13" stroke="#1f86d6" stroke-width="3.2" stroke-linecap="round"/>
<path d="M15 18.5 L2 7" stroke="#3aa7f0" stroke-width="3.2" stroke-linecap="round"/>
<path d="M14.3 0.4 L19.8 2.8 V17.2 L14.3 19.6 Z" fill="#2b9ae8"/></svg>
<svg style="left:852.5px;top:690px;" width="21" height="21" viewBox="0 0 21 21"><path d="M15 1.5 L4 12.5" stroke="#9a6ad2" stroke-width="3.4" stroke-linecap="round"/>
<path d="M15 18.5 L4 7.5" stroke="#b888ea" stroke-width="3.4" stroke-linecap="round"/>
<path d="M1 6 L4.5 5 V15 L1 14 Z" fill="#8a5ac8"/>
<path d="M14.3 0.4 L19.8 2.8 V17.2 L14.3 19.6 Z" fill="#c8a0f4"/></svg>
<svg style="left:888px;top:689px;" width="24" height="24" viewBox="0 0 24 24"><path d="M11 1.5 C5.5 1.5 1.5 5.7 1.5 11 C1.5 12.8 2 14.5 2.9 16 L1.5 20.5 L6.2 19.2 C7.6 20 9.2 20.5 11 20.5 C16.3 20.5 20.5 16.3 20.5 11 C20.5 5.7 16.3 1.5 11 1.5 Z" fill="none" stroke="#25d366" stroke-width="2"/>
<path d="M7.5 6.5 C6.5 7.5 6.8 9.5 8.5 11.7 C10.5 14.2 12.8 15.3 14 15 C15 14.7 15.5 13.7 15.3 13.3 L13.5 12.3 L12.5 13.3 C11.3 12.8 9.8 11.4 9.3 10.2 L10.2 9.2 L9.2 7 Z" fill="#25d366"/></svg>
<div class="a" style="left:898px;top:686px;width:14px;height:14px;border-radius:50%;background:#4aa8f0;border:1.5px solid #1e1f1b"></div>
<div class="t" style="left:902.30px;top:689.77px;font-size:8.5px;color:#ffffff;transform:scaleX(0.9539);">6</div>
<div class="a" style="left:896px;top:714px;width:8px;height:2px;background:#9a9a9a;border-radius:1px"></div>
<div class="a" style="left:920px;top:683.5px;width:29px;height:33.5px;border-radius:4px;background:#2a2b27"></div>
<svg style="left:925px;top:690px;" width="22" height="20" viewBox="0 0 22 20"><rect x="5" y="0.5" width="16.5" height="19" rx="1.5" fill="#21a366"/>
<rect x="5" y="0.5" width="16.5" height="6.3" rx="1" fill="#33c481"/><rect x="5" y="13" width="16.5" height="6.5" rx="1" fill="#107c41"/>
<rect x="0" y="4.5" width="11.5" height="11" rx="1.2" fill="#185c37"/>
<path d="M3 7 L8.5 13 M8.5 7 L3 13" stroke="#fff" stroke-width="1.6"/></svg>
<div class="a" style="left:929.5px;top:714.3px;width:13.3px;height:2px;background:#5fb0f0;border-radius:1px"></div>
<svg style="left:1037px;top:696px;" width="10" height="6" viewBox="0 0 10 6"><path d="M0.5 5.5 L5 1 L9.5 5.5" fill="none" stroke="#e8e8e8" stroke-width="1.3"/></svg>
<svg style="left:1062px;top:693px;" width="16" height="16" viewBox="0 0 16 16"><path d="M2 7 C2.5 3 6.5 1 10 2.5 L12.5 4" fill="none" stroke="#e0e0e0" stroke-width="1.1"/><path d="M10.5 0.5 L13 4 L9 4.5" fill="none" stroke="#e0e0e0" stroke-width="1.1"/>
<path d="M2.5 10 L4 13 C5 14 6 14 7 14" fill="none" stroke="#e0e0e0" stroke-width="1.1"/><path d="M1 12 L3 14.5 L5.5 12.5" fill="none" stroke="#e0e0e0" stroke-width="1"/>
<circle cx="11" cy="11" r="3.5" fill="#f59a1a"/></svg>
<div class="t" style="left:1090.00px;top:696.50px;font-size:10px;color:#e8e8e8;transform:scaleX(0.8776);">ENG</div>
<svg style="left:1125px;top:695px;" width="15" height="12" viewBox="0 0 15 12"><path d="M0.8 4.5 Q7.5 -1.5 14.2 4.5 M3 7 Q7.5 2.5 12 7 M5.2 9.3 Q7.5 7.5 9.8 9.3" fill="none" stroke="#e8e8e8" stroke-width="1.3"/><circle cx="7.5" cy="11" r="1.2" fill="#e8e8e8"/></svg>
<svg style="left:1145px;top:694px;" width="16" height="14" viewBox="0 0 16 14"><path d="M1 5 H4 L8 1.5 V12.5 L4 9 H1 Z" fill="none" stroke="#e8e8e8" stroke-width="1.1"/><path d="M10.5 4.5 Q12 7 10.5 9.5 M12.5 3 Q15 7 12.5 11" fill="none" stroke="#e8e8e8" stroke-width="1.1"/></svg>
<svg style="left:1164px;top:696px;" width="15" height="10" viewBox="0 0 15 10"><rect x="0.6" y="0.6" width="12" height="8.8" rx="2" fill="none" stroke="#e8e8e8" stroke-width="1.1"/><rect x="2.5" y="2.5" width="4.5" height="5" fill="#e8e8e8"/><rect x="13.3" y="3.5" width="1.5" height="3" fill="#e8e8e8"/></svg>
<div class="t" style="left:1208.00px;top:689.08px;font-size:10.5px;color:#f0f0f0;transform:scaleX(0.9204);">4:06 PM</div>
<div class="t" style="left:1192.00px;top:702.08px;font-size:10.5px;color:#f0f0f0;transform:scaleX(0.9682);">2025-09-23</div>
<svg style="left:1253px;top:693px;" width="12" height="14" viewBox="0 0 12 14"><path d="M2 10 V6 Q2 1.5 6 1.5 Q10 1.5 10 6 V10 L11.5 11.5 H0.5 Z" fill="none" stroke="#e8e8e8" stroke-width="1.1"/><path d="M4.5 13 H7.5" stroke="#e8e8e8" stroke-width="1.1"/><rect x="4" y="4" width="4" height="4" fill="#e8e8e8"/></svg>
<svg style="left:0;top:0;mix-blend-mode:lighten" width="1280" height="720" viewBox="0 0 1280 720">
<g fill="none" stroke="#5d5d5b" stroke-width="7.5" stroke-linecap="round" stroke-linejoin="round">
<path d="M576.5 653 Q566.5 656 566.5 664.5 Q566.5 675 578 675 L702 675"/>
<path d="M589.5 640 V675"/>
<circle cx="614" cy="661.2" r="9.8"/>
<path d="M644.5 657 V675 M662 657 V675 M678.5 657 V675"/>
<circle cx="702.7" cy="665.5" r="9.9"/>
</g>
<g fill="#5d5d5b"><circle cx="608.8" cy="640.5" r="4"/><circle cx="620" cy="640.5" r="4"/><circle cx="636" cy="649.3" r="4"/><circle cx="646.6" cy="649.3" r="4"/></g>
<text x="563" y="700.5" font-family="Liberation Sans" font-size="23" font-weight="bold" fill="#5d5d5b" textLength="153" lengthAdjust="spacingAndGlyphs">mostaql.com</text>
</svg>
</body></html>
